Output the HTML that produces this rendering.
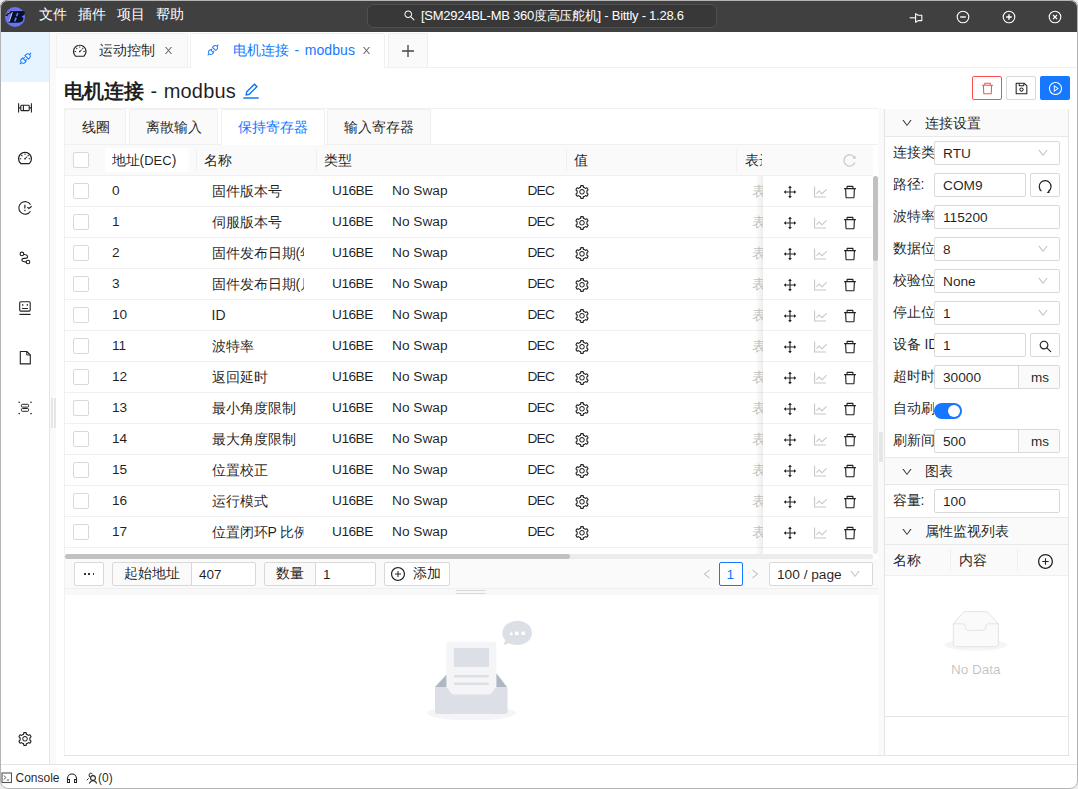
<!DOCTYPE html><html><head><meta charset="utf-8"><style>
*{box-sizing:border-box;margin:0;padding:0}
html,body{width:1078px;height:789px;overflow:hidden;background:#ececec;font-family:"Liberation Sans",sans-serif;font-size:14px;color:rgba(0,0,0,.88)}
.a{position:absolute;display:block}
.t{position:absolute;white-space:nowrap;line-height:16px}
.l{font-size:13.5px}
.b{position:absolute;border:1px solid #d9d9d9;border-radius:4px;background:#fff}
#win{position:absolute;left:0;top:0;width:1078px;height:789px;border-radius:8px;background:#fff;overflow:hidden}
#frame{position:absolute;left:0;top:0;width:1078px;height:789px;border:1px solid #b4b4b4;border-radius:8px;pointer-events:none}
</style></head><body>

<div id="win">
<div class="a" style="left:0px;top:0px;width:1078px;height:32px;background:#404040"></div>
<svg class="a" style="left:0px;top:0px" width="32" height="32" viewBox="0 0 32 32" ><circle cx="15" cy="17" r="10" fill="#6b73f2"/><path d="M5.3 15.6 Q5.6 11.6 10.5 11.2 L22 11.1 Q25.6 11.3 24.6 14 Q24 15.9 21.4 16.6 Q23.9 17.4 23.2 19.8 Q22.2 22.6 17.5 22.7 L9.6 22.7 Q8.3 22.6 8.6 21.7 L11.6 13.2 Q8.2 13.4 7.3 16.2 Z" fill="#071228"/><path d="M12.3 12.2 L9.2 21.6" stroke="#e8ebff" stroke-width=".9" fill="none"/><path d="M17.8 13 L16.5 16.2 M16.2 17.6 L14.6 21.4" stroke="#6b73f2" stroke-width="1.6" fill="none"/><path d="M6.1 14.6 Q6.8 12.3 9.8 12" stroke="#e8ebff" stroke-width=".7" fill="none"/></svg>
<div class="t" style="left:38.5px;top:6px;color:#fff;font-size:14px">文件</div>
<div class="t" style="left:77.5px;top:6px;color:#fff;font-size:14px">插件</div>
<div class="t" style="left:116.5px;top:6px;color:#fff;font-size:14px">项目</div>
<div class="t" style="left:155.5px;top:6px;color:#fff;font-size:14px">帮助</div>
<div class="a" style="left:367px;top:4px;width:350px;height:24px;border:1px solid #505050;border-radius:6px;background:#383838"></div>
<svg class="a" style="left:403px;top:9px;" width="13" height="13" viewBox="0 0 1024 1024" fill="#fff"><path d="M909.6 854.5L649.9 594.8C690.2 542.7 712 479 712 412c0-80.2-31.3-155.4-87.9-212.1-56.6-56.7-132-87.9-212.1-87.9s-155.5 31.3-212.1 87.9C143.2 256.5 112 331.8 112 412c0 80.1 31.3 155.5 87.9 212.1C256.5 680.8 331.8 712 412 712c67 0 130.6-21.8 182.7-62l259.7 259.6a8.2 8.2 0 0011.6 0l43.6-43.5a8.2 8.2 0 000-11.6zM570.4 570.4C528 612.7 471.8 636 412 636s-116-23.3-158.4-65.6C211.3 528 188 471.8 188 412s23.3-116.1 65.6-158.4C296 211.3 352.2 188 412 188s116.1 23.2 158.4 65.6S636 352.2 636 412s-23.3 116.1-65.6 158.4z"/></svg>
<div class="t" style="left:421px;top:8px;color:#fff;font-size:13px;letter-spacing:-.26px">[SM2924BL-MB 360度高压舵机] - Bittly - 1.28.6</div>
<svg class="a" style="left:909px;top:11px" width="14" height="13" viewBox="0 0 14 13" ><path d="M0.7 6.8 H6.5" stroke="#fff" stroke-width="1.1"/><path d="M6.6 2.6 L9.2 4.2 H12.8 V9.6 H9.2 L6.6 11.2 Z" stroke="#fff" stroke-width="1.1" fill="none" stroke-linejoin="round"/></svg>
<svg class="a" style="left:956px;top:10px" width="14" height="14" viewBox="0 0 14 14" ><circle cx="7" cy="7" r="5.8" stroke="#fff" stroke-width="1.1" fill="none"/><path d="M4.2 7 H9.8" stroke="#fff" stroke-width="1.4"/></svg>
<svg class="a" style="left:1002px;top:10px" width="14" height="14" viewBox="0 0 14 14" ><circle cx="7" cy="7" r="5.8" stroke="#fff" stroke-width="1.1" fill="none"/><path d="M4.2 7 H9.8 M7 4.2 V9.8" stroke="#fff" stroke-width="1.4"/></svg>
<svg class="a" style="left:1048px;top:10px" width="14" height="14" viewBox="0 0 14 14" ><circle cx="7" cy="7" r="5.8" stroke="#fff" stroke-width="1.1" fill="none"/><path d="M5 5 L9 9 M9 5 L5 9" stroke="#fff" stroke-width="1.1"/></svg>
<div class="a" style="left:0px;top:32px;width:50px;height:732px;background:#fff;border-right:1px solid #e3e5ea"></div>
<div class="a" style="left:0px;top:32px;width:49px;height:50px;background:#e6f4ff"></div>
<div class="a" style="left:50px;top:32px;width:6px;height:732px;background:#fafafa"></div>
<div class="a" style="left:51px;top:398px;width:2px;height:30px;background:#e6e6e6"></div>
<div class="a" style="left:54px;top:398px;width:2px;height:30px;background:#e6e6e6"></div>
<svg class="a" style="left:17.5px;top:50.5px;" width="15" height="15" viewBox="0 0 1024 1024" fill="#1677ff"><path d="M917.7 148.8l-42.4-42.4c-1.6-1.6-3.6-2.3-5.7-2.3s-4.1.8-5.7 2.3l-76.1 76.1a199.27 199.27 0 00-112.1-34.3c-51.2 0-102.4 19.5-141.5 58.6L432.3 308.7a8.03 8.03 0 000 11.3L704 591.7c1.6 1.6 3.6 2.3 5.7 2.3 2 0 4.1-.8 5.7-2.3l101.9-101.9c68.9-69 77-175.7 24.3-253.5l76.1-76.1c3.1-3.2 3.1-8.3 0-11.4zM769.1 441.7l-59.4 59.4-186.8-186.8 59.4-59.4c24.9-24.9 58.1-38.7 93.4-38.7 35.3 0 68.4 13.7 93.4 38.7 24.9 24.9 38.7 58.1 38.7 93.4 0 35.3-13.8 68.4-38.7 93.4zm-190.2 105a8.03 8.03 0 00-11.3 0L501 613.3 410.7 523l66.7-66.7c3.1-3.1 3.1-8.2 0-11.3L441 408.6a8.03 8.03 0 00-11.3 0L363 475.3l-43-43a7.85 7.85 0 00-5.7-2.3c-2 0-4.1.8-5.7 2.3L206.8 534.2c-68.9 69-77 175.7-24.3 253.5l-76.1 76.1a8.03 8.03 0 000 11.3l42.4 42.4c1.6 1.6 3.6 2.3 5.7 2.3s4.1-.8 5.7-2.3l76.1-76.1c33.7 22.9 72.9 34.3 112.1 34.3 51.2 0 102.4-19.5 141.5-58.6l101.9-101.9c3.1-3.1 3.1-8.2 0-11.3l-43-43 66.7-66.7c3.1-3.1 3.1-8.2 0-11.3l-36.6-36.2zM441.7 769.1a131.32 131.32 0 01-93.4 38.7c-35.3 0-68.4-13.7-93.4-38.7a131.32 131.32 0 01-38.7-93.4c0-35.3 13.7-68.4 38.7-93.4l59.4-59.4 186.8 186.8-59.4 59.4z"/></svg>
<svg class="a" style="left:18px;top:103px" width="14" height="11" viewBox="0 0 14 11" ><g stroke="#222" stroke-width="1.1" fill="none"><path d="M0.6 0.3 V9.5 M13.4 0.3 V9.5"/><rect x="2.8" y="2.3" width="8.4" height="5.3" rx=".8"/><path d="M5.4 2.3 V7.6 M0.6 4.9 H2.8 M11.2 4.9 H13.4"/></g></svg>
<svg class="a" style="left:17px;top:150px;" width="16" height="16" viewBox="0 0 1024 1024" fill="#222"><path d="M924.8 385.6a446.7 446.7 0 00-96-142.4 446.7 446.7 0 00-142.4-96C631.1 123.8 572.5 112 512 112s-119.1 11.8-174.4 35.2a446.7 446.7 0 00-142.4 96 446.7 446.7 0 00-96 142.4C75.8 440.9 64 499.5 64 560c0 132.7 58.3 257.7 159.9 343.1l1.7 1.4c5.8 4.8 13.1 7.5 20.6 7.5h531.7c7.5 0 14.8-2.7 20.6-7.5l1.7-1.4C901.7 817.7 960 692.7 960 560c0-60.5-11.9-119.1-35.2-174.4zM761.4 836H262.6A371.12 371.12 0 01140 560c0-99.4 38.7-192.8 109-263 70.3-70.3 163.7-109 263-109 99.4 0 192.8 38.7 263 109 70.3 70.3 109 163.7 109 263 0 105.6-44.5 205.5-122.6 276zM623.5 421.5a8.03 8.03 0 00-11.3 0L527.7 506c-18.7-5-39.4-.2-54.1 14.5a55.95 55.95 0 000 79.2 55.95 55.95 0 0079.2 0 55.87 55.87 0 0014.5-54.1l84.5-84.5c3.1-3.1 3.1-8.2 0-11.3l-28.3-28.3zM490 320h44c4.4 0 8-3.6 8-8v-80c0-4.4-3.6-8-8-8h-44c-4.4 0-8 3.6-8 8v80c0 4.4 3.6 8 8 8zm260 218v44c0 4.4 3.6 8 8 8h80c4.4 0 8-3.6 8-8v-44c0-4.4-3.6-8-8-8h-80c-4.4 0-8 3.6-8 8zm12.7-197.2l-31.1-31.1a8.03 8.03 0 00-11.3 0l-56.6 56.6a8.03 8.03 0 000 11.3l31.1 31.1c3.1 3.1 8.2 3.1 11.3 0l56.6-56.6c3.1-3.1 3.1-8.2 0-11.3zm-458.6-31.1a8.03 8.03 0 00-11.3 0l-31.1 31.1a8.03 8.03 0 000 11.3l56.6 56.6c3.1 3.1 8.2 3.1 11.3 0l31.1-31.1c3.1-3.1 3.1-8.2 0-11.3l-56.6-56.6zM262 530h-80c-4.4 0-8 3.6-8 8v44c0 4.4 3.6 8 8 8h80c4.4 0 8-3.6 8-8v-44c0-4.4-3.6-8-8-8z"/></svg>
<svg class="a" style="left:18px;top:201px" width="15" height="15" viewBox="0 0 15 15" ><g stroke="#222" stroke-width="1.1" fill="none"><path d="M12.5 3.6 A6.3 6.3 0 1 0 12.5 10.2"/><path d="M6.9 3.8 V7.4" stroke-width="1.2"/><path d="M9.4 6.1 L10.9 7.5 L13.6 5.2" stroke-width="1.2"/></g><circle cx="6.9" cy="9.4" r=".75" fill="#222"/></svg>
<svg class="a" style="left:18px;top:251px" width="14" height="14" viewBox="0 0 14 14" ><g stroke="#222" stroke-width="1.1" fill="none"><circle cx="3.9" cy="2.9" r="1.8"/><circle cx="10" cy="11" r="1.8"/><path d="M5.6 3.2 Q9.6 3.8 9.6 5.8 Q9.6 7.4 7 7.4 H6 Q3.9 7.4 3.9 9.1 Q3.9 10.8 8.2 11.1"/></g></svg>
<svg class="a" style="left:18px;top:301px" width="14" height="14" viewBox="0 0 14 14" ><g stroke="#222" stroke-width="1.1" fill="none"><rect x="1.7" y="0.7" width="10.5" height="9.4" rx="1"/><path d="M1.4 13.4 H12.6" stroke-width="1.2"/><path d="M4.5 7.5 H9.5" stroke-width="1.2" stroke-linecap="round"/></g><ellipse cx="4.7" cy="3.9" rx=".7" ry=".9" fill="#222"/><ellipse cx="9.3" cy="3.9" rx=".7" ry=".9" fill="#222"/></svg>
<svg class="a" style="left:19px;top:350px" width="13" height="15" viewBox="0 0 13 15" ><path d="M1.3 1.5 H7.7 L11.3 5 V13.9 H1.3 Z" stroke="#222" stroke-width="1.1" fill="none" stroke-linejoin="round"/><path d="M7.7 1.5 V5 H11.3" stroke="#222" stroke-width=".9" fill="none"/></svg>
<svg class="a" style="left:18px;top:401px" width="14" height="14" viewBox="0 0 14 14" ><g stroke="#222" stroke-width="1" fill="none"><rect x="3.4" y="3.3" width="7.2" height="2.8" rx="1"/><rect x="3.4" y="7.5" width="7.2" height="2.8" rx="1"/></g><g fill="#222"><circle cx="1.2" cy="1.2" r=".8"/><circle cx="13" cy="1.2" r=".8"/><circle cx="1.2" cy="12.6" r=".8"/><circle cx="13" cy="12.6" r=".8"/></g></svg>
<svg class="a" style="left:17px;top:731px;" width="16" height="16" viewBox="0 0 1024 1024" fill="#222"><path d="M924.8 625.7l-65.5-56c3.1-19 4.7-38.4 4.7-57.8s-1.6-38.8-4.7-57.8l65.5-56a32.03 32.03 0 009.3-35.2l-.9-2.6a443.74 443.74 0 00-79.7-137.9l-1.8-2.1a32.12 32.12 0 00-35.1-9.5l-81.3 28.9c-30-24.6-63.5-44-99.7-57.6l-15.7-85a32.05 32.05 0 00-25.8-25.7l-2.7-.5c-52.1-9.4-106.9-9.4-159 0l-2.7.5a32.05 32.05 0 00-25.8 25.7l-15.8 85.4a351.86 351.86 0 00-99 57.4l-81.9-29.1a32 32 0 00-35.1 9.5l-1.8 2.1a446.02 446.02 0 00-79.7 137.9l-.9 2.6c-4.5 12.5-.8 26.5 9.3 35.2l66.3 56.6c-3.1 18.8-4.6 38-4.6 57.1 0 19.2 1.5 38.4 4.6 57.1L99 625.5a32.03 32.03 0 00-9.3 35.2l.9 2.6c18.1 50.4 44.9 96.9 79.7 137.9l1.8 2.1a32.12 32.12 0 0035.1 9.5l81.9-29.1c29.8 24.5 63.1 43.9 99 57.4l15.8 85.4a32.05 32.05 0 0025.8 25.7l2.7.5a449.4 449.4 0 00159 0l2.7-.5a32.05 32.05 0 0025.8-25.7l15.7-85a350 350 0 0099.7-57.6l81.3 28.9a32 32 0 0035.1-9.5l1.8-2.1c34.8-41.1 61.6-87.5 79.7-137.9l.9-2.6c4.5-12.3.8-26.3-9.3-35zM788.3 465.9c2.5 15.1 3.8 30.6 3.8 46.1s-1.3 31-3.8 46.1l-6.6 40.1 74.7 63.9a370.03 370.03 0 01-42.6 73.6L721 702.8l-31.4 25.8c-23.9 19.6-50.5 35-79.3 45.8l-38.1 14.3-17.9 97a377.5 377.5 0 01-85 0l-17.9-97.2-37.8-14.5c-28.5-10.8-55-26.2-78.7-45.7l-31.4-25.9-93.4 33.2c-17-22.9-31.2-47.6-42.6-73.6l75.5-64.5-6.5-40c-2.4-14.9-3.7-30.3-3.7-45.5 0-15.3 1.2-30.6 3.7-45.5l6.5-40-75.5-64.5c11.3-26.1 25.6-50.7 42.6-73.6l93.4 33.2 31.4-25.9c23.7-19.5 50.2-34.9 78.7-45.7l37.9-14.3 17.9-97.2c28.1-3.2 56.8-3.2 85 0l17.9 97 38.1 14.3c28.7 10.8 55.4 26.2 79.3 45.8l31.4 25.8 92.8-32.9c17 22.9 31.2 47.6 42.6 73.6L781.8 426l6.5 39.9zM512 326c-97.2 0-176 78.8-176 176s78.8 176 176 176 176-78.8 176-176-78.8-176-176-176zm79.2 255.2A111.6 111.6 0 01512 614c-29.9 0-58-11.7-79.2-32.8A111.6 111.6 0 01400 502c0-29.9 11.7-58 32.8-79.2C454 401.6 482.1 390 512 390c29.9 0 58 11.6 79.2 32.8A111.6 111.6 0 01624 502c0 29.9-11.7 58-32.8 79.2z"/></svg>
<div class="a" style="left:56px;top:67px;width:1022px;height:1px;background:#f0f0f0"></div>
<div class="a" style="left:56px;top:33px;width:132px;height:34px;background:#fafafa;border:1px solid #f0f0f0;border-bottom:none;border-radius:2px 2px 0 0"></div>
<div class="a" style="left:190px;top:33px;width:195px;height:35px;background:#fff;border:1px solid #f0f0f0;border-bottom:none;border-radius:2px 2px 0 0"></div>
<div class="a" style="left:388px;top:33px;width:40px;height:34px;background:#fafafa;border:1px solid #f0f0f0;border-bottom:none;border-radius:2px 2px 0 0"></div>
<svg class="a" style="left:72.3px;top:42.5px;" width="15.5" height="15.5" viewBox="0 0 1024 1024" fill="#222"><path d="M924.8 385.6a446.7 446.7 0 00-96-142.4 446.7 446.7 0 00-142.4-96C631.1 123.8 572.5 112 512 112s-119.1 11.8-174.4 35.2a446.7 446.7 0 00-142.4 96 446.7 446.7 0 00-96 142.4C75.8 440.9 64 499.5 64 560c0 132.7 58.3 257.7 159.9 343.1l1.7 1.4c5.8 4.8 13.1 7.5 20.6 7.5h531.7c7.5 0 14.8-2.7 20.6-7.5l1.7-1.4C901.7 817.7 960 692.7 960 560c0-60.5-11.9-119.1-35.2-174.4zM761.4 836H262.6A371.12 371.12 0 01140 560c0-99.4 38.7-192.8 109-263 70.3-70.3 163.7-109 263-109 99.4 0 192.8 38.7 263 109 70.3 70.3 109 163.7 109 263 0 105.6-44.5 205.5-122.6 276zM623.5 421.5a8.03 8.03 0 00-11.3 0L527.7 506c-18.7-5-39.4-.2-54.1 14.5a55.95 55.95 0 000 79.2 55.95 55.95 0 0079.2 0 55.87 55.87 0 0014.5-54.1l84.5-84.5c3.1-3.1 3.1-8.2 0-11.3l-28.3-28.3zM490 320h44c4.4 0 8-3.6 8-8v-80c0-4.4-3.6-8-8-8h-44c-4.4 0-8 3.6-8 8v80c0 4.4 3.6 8 8 8zm260 218v44c0 4.4 3.6 8 8 8h80c4.4 0 8-3.6 8-8v-44c0-4.4-3.6-8-8-8h-80c-4.4 0-8 3.6-8 8zm12.7-197.2l-31.1-31.1a8.03 8.03 0 00-11.3 0l-56.6 56.6a8.03 8.03 0 000 11.3l31.1 31.1c3.1 3.1 8.2 3.1 11.3 0l56.6-56.6c3.1-3.1 3.1-8.2 0-11.3zm-458.6-31.1a8.03 8.03 0 00-11.3 0l-31.1 31.1a8.03 8.03 0 000 11.3l56.6 56.6c3.1 3.1 8.2 3.1 11.3 0l31.1-31.1c3.1-3.1 3.1-8.2 0-11.3l-56.6-56.6zM262 530h-80c-4.4 0-8 3.6-8 8v44c0 4.4 3.6 8 8 8h80c4.4 0 8-3.6 8-8v-44c0-4.4-3.6-8-8-8z"/></svg>
<div class="t" style="left:98.5px;top:42px;">运动控制</div>
<svg class="a" style="left:163px;top:45px;" width="11" height="11" viewBox="0 0 1024 1024" fill="#666"><path d="M563.8 512l262.5-312.9c4.4-5.2.7-13.1-6.1-13.1h-79.8c-4.7 0-9.2 2.1-12.3 5.7L511.6 449.8 295.1 191.7c-3-3.6-7.5-5.7-12.3-5.7H203c-6.8 0-10.5 7.9-6.1 13.1L459.4 512 196.9 824.9A7.95 7.95 0 00203 838h79.8c4.7 0 9.2-2.1 12.3-5.7l216.5-258.1 216.5 258.1c3 3.6 7.5 5.7 12.3 5.7h79.8c6.8 0 10.5-7.9 6.1-13.1L563.8 512z"/></svg>
<svg class="a" style="left:206px;top:43px;" width="14" height="14" viewBox="0 0 1024 1024" fill="#1677ff"><path d="M917.7 148.8l-42.4-42.4c-1.6-1.6-3.6-2.3-5.7-2.3s-4.1.8-5.7 2.3l-76.1 76.1a199.27 199.27 0 00-112.1-34.3c-51.2 0-102.4 19.5-141.5 58.6L432.3 308.7a8.03 8.03 0 000 11.3L704 591.7c1.6 1.6 3.6 2.3 5.7 2.3 2 0 4.1-.8 5.7-2.3l101.9-101.9c68.9-69 77-175.7 24.3-253.5l76.1-76.1c3.1-3.2 3.1-8.3 0-11.4zM769.1 441.7l-59.4 59.4-186.8-186.8 59.4-59.4c24.9-24.9 58.1-38.7 93.4-38.7 35.3 0 68.4 13.7 93.4 38.7 24.9 24.9 38.7 58.1 38.7 93.4 0 35.3-13.8 68.4-38.7 93.4zm-190.2 105a8.03 8.03 0 00-11.3 0L501 613.3 410.7 523l66.7-66.7c3.1-3.1 3.1-8.2 0-11.3L441 408.6a8.03 8.03 0 00-11.3 0L363 475.3l-43-43a7.85 7.85 0 00-5.7-2.3c-2 0-4.1.8-5.7 2.3L206.8 534.2c-68.9 69-77 175.7-24.3 253.5l-76.1 76.1a8.03 8.03 0 000 11.3l42.4 42.4c1.6 1.6 3.6 2.3 5.7 2.3s4.1-.8 5.7-2.3l76.1-76.1c33.7 22.9 72.9 34.3 112.1 34.3 51.2 0 102.4-19.5 141.5-58.6l101.9-101.9c3.1-3.1 3.1-8.2 0-11.3l-43-43 66.7-66.7c3.1-3.1 3.1-8.2 0-11.3l-36.6-36.2zM441.7 769.1a131.32 131.32 0 01-93.4 38.7c-35.3 0-68.4-13.7-93.4-38.7a131.32 131.32 0 01-38.7-93.4c0-35.3 13.7-68.4 38.7-93.4l59.4-59.4 186.8 186.8-59.4 59.4z"/></svg>
<div class="t" style="left:232.5px;top:42px;color:#1677ff;word-spacing:1.5px;letter-spacing:.1px">电机连接 - modbus</div>
<svg class="a" style="left:361px;top:45px;" width="11" height="11" viewBox="0 0 1024 1024" fill="#666"><path d="M563.8 512l262.5-312.9c4.4-5.2.7-13.1-6.1-13.1h-79.8c-4.7 0-9.2 2.1-12.3 5.7L511.6 449.8 295.1 191.7c-3-3.6-7.5-5.7-12.3-5.7H203c-6.8 0-10.5 7.9-6.1 13.1L459.4 512 196.9 824.9A7.95 7.95 0 00203 838h79.8c4.7 0 9.2-2.1 12.3-5.7l216.5-258.1 216.5 258.1c3 3.6 7.5 5.7 12.3 5.7h79.8c6.8 0 10.5-7.9 6.1-13.1L563.8 512z"/></svg>
<svg class="a" style="left:401px;top:44px" width="14" height="14" viewBox="0 0 14 14" ><path d="M7 1 V13 M1 7 H13" stroke="#444" stroke-width="1.3"/></svg>
<div class="t" style="left:63.5px;top:80px;font-size:20px;line-height:22px;word-spacing:.5px;letter-spacing:.2px"><b>电机连接</b> - modbus</div>
<svg class="a" style="left:241px;top:81px;" width="20" height="20" viewBox="0 0 1024 1024" fill="#1677ff"><path d="M257.7 752c2 0 4-.2 6-.5L431.9 722c2-.4 3.9-1.3 5.3-2.8l423.9-423.9a9.96 9.96 0 000-14.1L694.9 114.9c-1.9-1.9-4.4-2.9-7.1-2.9s-5.2 1-7.1 2.9L256.8 538.8c-1.5 1.5-2.4 3.3-2.8 5.3l-29.5 168.2a33.5 33.5 0 009.4 29.8c6.6 6.4 14.9 9.9 23.8 9.9zm67.4-174.4L687.8 215l73.3 73.3-362.7 362.6-88.9 15.7 15.6-89zM880 836H144c-17.7 0-32 14.3-32 32v36c0 4.4 3.6 8 8 8h784c4.4 0 8-3.6 8-8v-36c0-17.7-14.3-32-32-32z"/></svg>
<div class="a" style="left:972px;top:76px;width:30px;height:24px;border:1px solid #ff4d4f;border-radius:2px;background:#fff"></div>
<svg class="a" style="left:979.5px;top:80.5px;" width="15" height="15" viewBox="0 0 1024 1024" fill="#ff4d4f"><path d="M360 184h-8c4.4 0 8-3.6 8-8v8h304v-8c0 4.4 3.6 8 8 8h-8v72h72v-80c0-35.3-28.7-64-64-64H352c-35.3 0-64 28.7-64 64v80h72v-72zm504 72H160c-17.7 0-32 14.3-32 32v32c0 4.4 3.6 8 8 8h60.4l24.7 523c1.6 34.1 29.8 61 63.9 61h454c34.2 0 62.3-26.8 63.9-61l24.7-523H888c4.4 0 8-3.6 8-8v-32c0-17.7-14.3-32-32-32zM731.3 840H292.7l-24.2-512h487l-24.2 512z"/></svg>
<div class="a" style="left:1006px;top:76px;width:30px;height:24px;border:1px solid #d9d9d9;border-radius:2px;background:#fff"></div>
<svg class="a" style="left:1013.5px;top:80.5px;" width="15" height="15" viewBox="0 0 1024 1024" fill="#222"><path d="M893.3 293.3L730.7 130.7c-7.5-7.5-16.7-13-26.7-16V112H144c-17.7 0-32 14.3-32 32v736c0 17.7 14.3 32 32 32h736c17.7 0 32-14.3 32-32V338.5c0-17-6.7-33.2-18.7-45.2zM384 184h256v104H384V184zm456 656H184V184h136v136c0 17.7 14.3 32 32 32h320c17.7 0 32-14.3 32-32V205.8l136 136V840zM512 442c-79.5 0-144 64.5-144 144s64.5 144 144 144 144-64.5 144-144-64.5-144-144-144zm0 224c-44.2 0-80-35.8-80-80s35.8-80 80-80 80 35.8 80 80-35.8 80-80 80z"/></svg>
<div class="a" style="left:1040px;top:76px;width:30px;height:24px;border-radius:2px;background:#1677ff"></div>
<svg class="a" style="left:1047.5px;top:80.5px;" width="15" height="15" viewBox="0 0 1024 1024" fill="#fff"><path d="M512 64C264.6 64 64 264.6 64 512s200.6 448 448 448 448-200.6 448-448S759.4 64 512 64zm0 820c-205.4 0-372-166.6-372-372s166.6-372 372-372 372 166.6 372 372-166.6 372-372 372zM719.4 499.1l-296.1-215A15.9 15.9 0 00398 297v430c0 13.1 14.8 20.5 25.3 12.9l296.1-215a15.9 15.9 0 000-25.8zm-257.6 134V390.9L628.5 512 461.8 633.1z"/></svg>
<div class="a" style="left:64px;top:108px;width:815px;height:648px;border:1px solid #f0f0f0;border-right:none;background:#fff"></div>
<div class="a" style="left:65px;top:144px;width:813px;height:1px;background:#f0f0f0"></div>
<div class="a" style="left:64px;top:109px;width:62px;height:35px;background:#fafafa;border:1px solid #f0f0f0;border-bottom:none;border-radius:2px 2px 0 0"></div>
<div class="t" style="left:81.5px;top:119px;color:rgba(0,0,0,.88)">线圈</div>
<div class="a" style="left:129px;top:109px;width:89px;height:35px;background:#fafafa;border:1px solid #f0f0f0;border-bottom:none;border-radius:2px 2px 0 0"></div>
<div class="t" style="left:145.5px;top:119px;color:rgba(0,0,0,.88)">离散输入</div>
<div class="a" style="left:221px;top:109px;width:104px;height:36px;background:#fff;border:1px solid #f0f0f0;border-bottom:none;border-radius:2px 2px 0 0"></div>
<div class="t" style="left:237.5px;top:119px;color:#1677ff">保持寄存器</div>
<div class="a" style="left:327px;top:109px;width:104px;height:35px;background:#fafafa;border:1px solid #f0f0f0;border-bottom:none;border-radius:2px 2px 0 0"></div>
<div class="t" style="left:343.5px;top:119px;color:rgba(0,0,0,.88)">输入寄存器</div>
<div class="a" style="left:65px;top:145px;width:808px;height:31px;background:#fafafa;border-bottom:1px solid #f0f0f0"></div>
<div class="a" style="left:105px;top:148px;width:84px;height:24px;background:#fff;border-radius:4px"></div>
<div class="a" style="left:196px;top:150px;width:1px;height:21px;background:#f0f0f0"></div>
<div class="a" style="left:316px;top:150px;width:1px;height:21px;background:#f0f0f0"></div>
<div class="a" style="left:566px;top:150px;width:1px;height:21px;background:#f0f0f0"></div>
<div class="a" style="left:736px;top:150px;width:1px;height:21px;background:#f0f0f0"></div>
<div class="a" style="left:73px;top:152px;width:16px;height:16px;border:1px solid #d9d9d9;border-radius:2px;background:#fff"></div>
<div class="t" style="left:111.5px;top:152px;">地址(<span style="font-size:13px">DEC</span>)</div>
<div class="t" style="left:204px;top:152px;">名称</div>
<div class="t" style="left:324px;top:152px;">类型</div>
<div class="t" style="left:574px;top:152px;">值</div>
<div class="a" style="left:745px;top:145px;width:17px;height:30px;overflow:hidden"><div class="t" style="left:0;top:7px">表达式</div></div>
<svg class="a" style="left:842px;top:153px;" width="15" height="15" viewBox="0 0 1024 1024" fill="#c4c4c4"><path d="M909.1 209.3l-56.4 44.1C775.8 155.1 656.2 92 521.9 92 290 92 102.3 279.5 102 511.5 101.7 743.7 289.8 932 521.9 932c181.3 0 335.8-115 394.6-276.1 1.5-4.2-.7-8.9-4.9-10.3l-56.7-19.5a8 8 0 00-10.1 4.8c-1.8 5-3.8 10-5.9 14.9-17.3 41-42.1 77.8-73.7 109.4A344.77 344.77 0 01655.9 829c-42.3 17.9-87.4 27-133.8 27-46.5 0-91.5-9.1-133.8-27A341.5 341.5 0 01279 755.2a342.16 342.16 0 01-73.7-109.4c-17.9-42.4-27-87.4-27-133.9s9.1-91.5 27-133.9c17.3-41 42.1-77.8 73.7-109.4 31.6-31.6 68.4-56.4 109.3-73.8 42.3-17.9 87.4-27 133.8-27 46.5 0 91.5 9.1 133.8 27a341.5 341.5 0 01109.3 73.8c9.9 9.9 19.2 20.4 27.8 31.4l-60.2 47a8 8 0 003 14.1l175.6 43c5 1.2 9.9-2.6 9.9-7.7l.8-180.9c-.1-6.6-7.8-10.3-13-6.2z"/></svg>
<div class="a" style="left:65px;top:206px;width:808px;height:1px;background:#f0f0f0"></div>
<div class="a" style="left:73px;top:183px;width:16px;height:16px;border:1px solid #d9d9d9;border-radius:2px;background:#fff"></div>
<div class="t" style="left:112px;top:182.5px;font-size:13.7px">0</div>
<div class="a" style="left:211.5px;top:183px;width:92px;height:18px;overflow:hidden"><div class="t" style="left:0;top:0">固件版本号</div></div>
<div class="t" style="left:332px;top:182.5px;font-size:13.7px;letter-spacing:-.5px">U16BE</div>
<div class="t" style="left:392px;top:182.5px;font-size:13.7px">No Swap</div>
<div class="t" style="left:527.5px;top:182.5px;font-size:13.7px;letter-spacing:-.8px">DEC</div>
<svg class="a" style="left:574px;top:184px;" width="16" height="16" viewBox="0 0 1024 1024" fill="#222"><path d="M924.8 625.7l-65.5-56c3.1-19 4.7-38.4 4.7-57.8s-1.6-38.8-4.7-57.8l65.5-56a32.03 32.03 0 009.3-35.2l-.9-2.6a443.74 443.74 0 00-79.7-137.9l-1.8-2.1a32.12 32.12 0 00-35.1-9.5l-81.3 28.9c-30-24.6-63.5-44-99.7-57.6l-15.7-85a32.05 32.05 0 00-25.8-25.7l-2.7-.5c-52.1-9.4-106.9-9.4-159 0l-2.7.5a32.05 32.05 0 00-25.8 25.7l-15.8 85.4a351.86 351.86 0 00-99 57.4l-81.9-29.1a32 32 0 00-35.1 9.5l-1.8 2.1a446.02 446.02 0 00-79.7 137.9l-.9 2.6c-4.5 12.5-.8 26.5 9.3 35.2l66.3 56.6c-3.1 18.8-4.6 38-4.6 57.1 0 19.2 1.5 38.4 4.6 57.1L99 625.5a32.03 32.03 0 00-9.3 35.2l.9 2.6c18.1 50.4 44.9 96.9 79.7 137.9l1.8 2.1a32.12 32.12 0 0035.1 9.5l81.9-29.1c29.8 24.5 63.1 43.9 99 57.4l15.8 85.4a32.05 32.05 0 0025.8 25.7l2.7.5a449.4 449.4 0 00159 0l2.7-.5a32.05 32.05 0 0025.8-25.7l15.7-85a350 350 0 0099.7-57.6l81.3 28.9a32 32 0 0035.1-9.5l1.8-2.1c34.8-41.1 61.6-87.5 79.7-137.9l.9-2.6c4.5-12.3.8-26.3-9.3-35zM788.3 465.9c2.5 15.1 3.8 30.6 3.8 46.1s-1.3 31-3.8 46.1l-6.6 40.1 74.7 63.9a370.03 370.03 0 01-42.6 73.6L721 702.8l-31.4 25.8c-23.9 19.6-50.5 35-79.3 45.8l-38.1 14.3-17.9 97a377.5 377.5 0 01-85 0l-17.9-97.2-37.8-14.5c-28.5-10.8-55-26.2-78.7-45.7l-31.4-25.9-93.4 33.2c-17-22.9-31.2-47.6-42.6-73.6l75.5-64.5-6.5-40c-2.4-14.9-3.7-30.3-3.7-45.5 0-15.3 1.2-30.6 3.7-45.5l6.5-40-75.5-64.5c11.3-26.1 25.6-50.7 42.6-73.6l93.4 33.2 31.4-25.9c23.7-19.5 50.2-34.9 78.7-45.7l37.9-14.3 17.9-97.2c28.1-3.2 56.8-3.2 85 0l17.9 97 38.1 14.3c28.7 10.8 55.4 26.2 79.3 45.8l31.4 25.8 92.8-32.9c17 22.9 31.2 47.6 42.6 73.6L781.8 426l6.5 39.9zM512 326c-97.2 0-176 78.8-176 176s78.8 176 176 176 176-78.8 176-176-78.8-176-176-176zm79.2 255.2A111.6 111.6 0 01512 614c-29.9 0-58-11.7-79.2-32.8A111.6 111.6 0 01400 502c0-29.9 11.7-58 32.8-79.2C454 401.6 482.1 390 512 390c29.9 0 58 11.6 79.2 32.8A111.6 111.6 0 01624 502c0 29.9-11.7 58-32.8 79.2z"/></svg>
<div class="a" style="left:751.5px;top:183px;width:11px;height:18px;overflow:hidden"><div class="t" style="left:0;top:0;color:rgba(0,0,0,.25)">表达式</div></div>
<div class="a" style="left:65px;top:237px;width:808px;height:1px;background:#f0f0f0"></div>
<div class="a" style="left:73px;top:214px;width:16px;height:16px;border:1px solid #d9d9d9;border-radius:2px;background:#fff"></div>
<div class="t" style="left:112px;top:213.5px;font-size:13.7px">1</div>
<div class="a" style="left:211.5px;top:214px;width:92px;height:18px;overflow:hidden"><div class="t" style="left:0;top:0">伺服版本号</div></div>
<div class="t" style="left:332px;top:213.5px;font-size:13.7px;letter-spacing:-.5px">U16BE</div>
<div class="t" style="left:392px;top:213.5px;font-size:13.7px">No Swap</div>
<div class="t" style="left:527.5px;top:213.5px;font-size:13.7px;letter-spacing:-.8px">DEC</div>
<svg class="a" style="left:574px;top:215px;" width="16" height="16" viewBox="0 0 1024 1024" fill="#222"><path d="M924.8 625.7l-65.5-56c3.1-19 4.7-38.4 4.7-57.8s-1.6-38.8-4.7-57.8l65.5-56a32.03 32.03 0 009.3-35.2l-.9-2.6a443.74 443.74 0 00-79.7-137.9l-1.8-2.1a32.12 32.12 0 00-35.1-9.5l-81.3 28.9c-30-24.6-63.5-44-99.7-57.6l-15.7-85a32.05 32.05 0 00-25.8-25.7l-2.7-.5c-52.1-9.4-106.9-9.4-159 0l-2.7.5a32.05 32.05 0 00-25.8 25.7l-15.8 85.4a351.86 351.86 0 00-99 57.4l-81.9-29.1a32 32 0 00-35.1 9.5l-1.8 2.1a446.02 446.02 0 00-79.7 137.9l-.9 2.6c-4.5 12.5-.8 26.5 9.3 35.2l66.3 56.6c-3.1 18.8-4.6 38-4.6 57.1 0 19.2 1.5 38.4 4.6 57.1L99 625.5a32.03 32.03 0 00-9.3 35.2l.9 2.6c18.1 50.4 44.9 96.9 79.7 137.9l1.8 2.1a32.12 32.12 0 0035.1 9.5l81.9-29.1c29.8 24.5 63.1 43.9 99 57.4l15.8 85.4a32.05 32.05 0 0025.8 25.7l2.7.5a449.4 449.4 0 00159 0l2.7-.5a32.05 32.05 0 0025.8-25.7l15.7-85a350 350 0 0099.7-57.6l81.3 28.9a32 32 0 0035.1-9.5l1.8-2.1c34.8-41.1 61.6-87.5 79.7-137.9l.9-2.6c4.5-12.3.8-26.3-9.3-35zM788.3 465.9c2.5 15.1 3.8 30.6 3.8 46.1s-1.3 31-3.8 46.1l-6.6 40.1 74.7 63.9a370.03 370.03 0 01-42.6 73.6L721 702.8l-31.4 25.8c-23.9 19.6-50.5 35-79.3 45.8l-38.1 14.3-17.9 97a377.5 377.5 0 01-85 0l-17.9-97.2-37.8-14.5c-28.5-10.8-55-26.2-78.7-45.7l-31.4-25.9-93.4 33.2c-17-22.9-31.2-47.6-42.6-73.6l75.5-64.5-6.5-40c-2.4-14.9-3.7-30.3-3.7-45.5 0-15.3 1.2-30.6 3.7-45.5l6.5-40-75.5-64.5c11.3-26.1 25.6-50.7 42.6-73.6l93.4 33.2 31.4-25.9c23.7-19.5 50.2-34.9 78.7-45.7l37.9-14.3 17.9-97.2c28.1-3.2 56.8-3.2 85 0l17.9 97 38.1 14.3c28.7 10.8 55.4 26.2 79.3 45.8l31.4 25.8 92.8-32.9c17 22.9 31.2 47.6 42.6 73.6L781.8 426l6.5 39.9zM512 326c-97.2 0-176 78.8-176 176s78.8 176 176 176 176-78.8 176-176-78.8-176-176-176zm79.2 255.2A111.6 111.6 0 01512 614c-29.9 0-58-11.7-79.2-32.8A111.6 111.6 0 01400 502c0-29.9 11.7-58 32.8-79.2C454 401.6 482.1 390 512 390c29.9 0 58 11.6 79.2 32.8A111.6 111.6 0 01624 502c0 29.9-11.7 58-32.8 79.2z"/></svg>
<div class="a" style="left:751.5px;top:214px;width:11px;height:18px;overflow:hidden"><div class="t" style="left:0;top:0;color:rgba(0,0,0,.25)">表达式</div></div>
<div class="a" style="left:65px;top:268px;width:808px;height:1px;background:#f0f0f0"></div>
<div class="a" style="left:73px;top:245px;width:16px;height:16px;border:1px solid #d9d9d9;border-radius:2px;background:#fff"></div>
<div class="t" style="left:112px;top:244.5px;font-size:13.7px">2</div>
<div class="a" style="left:211.5px;top:245px;width:92px;height:18px;overflow:hidden"><div class="t" style="left:0;top:0">固件发布日期(年)</div></div>
<div class="t" style="left:332px;top:244.5px;font-size:13.7px;letter-spacing:-.5px">U16BE</div>
<div class="t" style="left:392px;top:244.5px;font-size:13.7px">No Swap</div>
<div class="t" style="left:527.5px;top:244.5px;font-size:13.7px;letter-spacing:-.8px">DEC</div>
<svg class="a" style="left:574px;top:246px;" width="16" height="16" viewBox="0 0 1024 1024" fill="#222"><path d="M924.8 625.7l-65.5-56c3.1-19 4.7-38.4 4.7-57.8s-1.6-38.8-4.7-57.8l65.5-56a32.03 32.03 0 009.3-35.2l-.9-2.6a443.74 443.74 0 00-79.7-137.9l-1.8-2.1a32.12 32.12 0 00-35.1-9.5l-81.3 28.9c-30-24.6-63.5-44-99.7-57.6l-15.7-85a32.05 32.05 0 00-25.8-25.7l-2.7-.5c-52.1-9.4-106.9-9.4-159 0l-2.7.5a32.05 32.05 0 00-25.8 25.7l-15.8 85.4a351.86 351.86 0 00-99 57.4l-81.9-29.1a32 32 0 00-35.1 9.5l-1.8 2.1a446.02 446.02 0 00-79.7 137.9l-.9 2.6c-4.5 12.5-.8 26.5 9.3 35.2l66.3 56.6c-3.1 18.8-4.6 38-4.6 57.1 0 19.2 1.5 38.4 4.6 57.1L99 625.5a32.03 32.03 0 00-9.3 35.2l.9 2.6c18.1 50.4 44.9 96.9 79.7 137.9l1.8 2.1a32.12 32.12 0 0035.1 9.5l81.9-29.1c29.8 24.5 63.1 43.9 99 57.4l15.8 85.4a32.05 32.05 0 0025.8 25.7l2.7.5a449.4 449.4 0 00159 0l2.7-.5a32.05 32.05 0 0025.8-25.7l15.7-85a350 350 0 0099.7-57.6l81.3 28.9a32 32 0 0035.1-9.5l1.8-2.1c34.8-41.1 61.6-87.5 79.7-137.9l.9-2.6c4.5-12.3.8-26.3-9.3-35zM788.3 465.9c2.5 15.1 3.8 30.6 3.8 46.1s-1.3 31-3.8 46.1l-6.6 40.1 74.7 63.9a370.03 370.03 0 01-42.6 73.6L721 702.8l-31.4 25.8c-23.9 19.6-50.5 35-79.3 45.8l-38.1 14.3-17.9 97a377.5 377.5 0 01-85 0l-17.9-97.2-37.8-14.5c-28.5-10.8-55-26.2-78.7-45.7l-31.4-25.9-93.4 33.2c-17-22.9-31.2-47.6-42.6-73.6l75.5-64.5-6.5-40c-2.4-14.9-3.7-30.3-3.7-45.5 0-15.3 1.2-30.6 3.7-45.5l6.5-40-75.5-64.5c11.3-26.1 25.6-50.7 42.6-73.6l93.4 33.2 31.4-25.9c23.7-19.5 50.2-34.9 78.7-45.7l37.9-14.3 17.9-97.2c28.1-3.2 56.8-3.2 85 0l17.9 97 38.1 14.3c28.7 10.8 55.4 26.2 79.3 45.8l31.4 25.8 92.8-32.9c17 22.9 31.2 47.6 42.6 73.6L781.8 426l6.5 39.9zM512 326c-97.2 0-176 78.8-176 176s78.8 176 176 176 176-78.8 176-176-78.8-176-176-176zm79.2 255.2A111.6 111.6 0 01512 614c-29.9 0-58-11.7-79.2-32.8A111.6 111.6 0 01400 502c0-29.9 11.7-58 32.8-79.2C454 401.6 482.1 390 512 390c29.9 0 58 11.6 79.2 32.8A111.6 111.6 0 01624 502c0 29.9-11.7 58-32.8 79.2z"/></svg>
<div class="a" style="left:751.5px;top:245px;width:11px;height:18px;overflow:hidden"><div class="t" style="left:0;top:0;color:rgba(0,0,0,.25)">表达式</div></div>
<div class="a" style="left:65px;top:299px;width:808px;height:1px;background:#f0f0f0"></div>
<div class="a" style="left:73px;top:276px;width:16px;height:16px;border:1px solid #d9d9d9;border-radius:2px;background:#fff"></div>
<div class="t" style="left:112px;top:275.5px;font-size:13.7px">3</div>
<div class="a" style="left:211.5px;top:276px;width:92px;height:18px;overflow:hidden"><div class="t" style="left:0;top:0">固件发布日期(月日)</div></div>
<div class="t" style="left:332px;top:275.5px;font-size:13.7px;letter-spacing:-.5px">U16BE</div>
<div class="t" style="left:392px;top:275.5px;font-size:13.7px">No Swap</div>
<div class="t" style="left:527.5px;top:275.5px;font-size:13.7px;letter-spacing:-.8px">DEC</div>
<svg class="a" style="left:574px;top:277px;" width="16" height="16" viewBox="0 0 1024 1024" fill="#222"><path d="M924.8 625.7l-65.5-56c3.1-19 4.7-38.4 4.7-57.8s-1.6-38.8-4.7-57.8l65.5-56a32.03 32.03 0 009.3-35.2l-.9-2.6a443.74 443.74 0 00-79.7-137.9l-1.8-2.1a32.12 32.12 0 00-35.1-9.5l-81.3 28.9c-30-24.6-63.5-44-99.7-57.6l-15.7-85a32.05 32.05 0 00-25.8-25.7l-2.7-.5c-52.1-9.4-106.9-9.4-159 0l-2.7.5a32.05 32.05 0 00-25.8 25.7l-15.8 85.4a351.86 351.86 0 00-99 57.4l-81.9-29.1a32 32 0 00-35.1 9.5l-1.8 2.1a446.02 446.02 0 00-79.7 137.9l-.9 2.6c-4.5 12.5-.8 26.5 9.3 35.2l66.3 56.6c-3.1 18.8-4.6 38-4.6 57.1 0 19.2 1.5 38.4 4.6 57.1L99 625.5a32.03 32.03 0 00-9.3 35.2l.9 2.6c18.1 50.4 44.9 96.9 79.7 137.9l1.8 2.1a32.12 32.12 0 0035.1 9.5l81.9-29.1c29.8 24.5 63.1 43.9 99 57.4l15.8 85.4a32.05 32.05 0 0025.8 25.7l2.7.5a449.4 449.4 0 00159 0l2.7-.5a32.05 32.05 0 0025.8-25.7l15.7-85a350 350 0 0099.7-57.6l81.3 28.9a32 32 0 0035.1-9.5l1.8-2.1c34.8-41.1 61.6-87.5 79.7-137.9l.9-2.6c4.5-12.3.8-26.3-9.3-35zM788.3 465.9c2.5 15.1 3.8 30.6 3.8 46.1s-1.3 31-3.8 46.1l-6.6 40.1 74.7 63.9a370.03 370.03 0 01-42.6 73.6L721 702.8l-31.4 25.8c-23.9 19.6-50.5 35-79.3 45.8l-38.1 14.3-17.9 97a377.5 377.5 0 01-85 0l-17.9-97.2-37.8-14.5c-28.5-10.8-55-26.2-78.7-45.7l-31.4-25.9-93.4 33.2c-17-22.9-31.2-47.6-42.6-73.6l75.5-64.5-6.5-40c-2.4-14.9-3.7-30.3-3.7-45.5 0-15.3 1.2-30.6 3.7-45.5l6.5-40-75.5-64.5c11.3-26.1 25.6-50.7 42.6-73.6l93.4 33.2 31.4-25.9c23.7-19.5 50.2-34.9 78.7-45.7l37.9-14.3 17.9-97.2c28.1-3.2 56.8-3.2 85 0l17.9 97 38.1 14.3c28.7 10.8 55.4 26.2 79.3 45.8l31.4 25.8 92.8-32.9c17 22.9 31.2 47.6 42.6 73.6L781.8 426l6.5 39.9zM512 326c-97.2 0-176 78.8-176 176s78.8 176 176 176 176-78.8 176-176-78.8-176-176-176zm79.2 255.2A111.6 111.6 0 01512 614c-29.9 0-58-11.7-79.2-32.8A111.6 111.6 0 01400 502c0-29.9 11.7-58 32.8-79.2C454 401.6 482.1 390 512 390c29.9 0 58 11.6 79.2 32.8A111.6 111.6 0 01624 502c0 29.9-11.7 58-32.8 79.2z"/></svg>
<div class="a" style="left:751.5px;top:276px;width:11px;height:18px;overflow:hidden"><div class="t" style="left:0;top:0;color:rgba(0,0,0,.25)">表达式</div></div>
<div class="a" style="left:65px;top:330px;width:808px;height:1px;background:#f0f0f0"></div>
<div class="a" style="left:73px;top:307px;width:16px;height:16px;border:1px solid #d9d9d9;border-radius:2px;background:#fff"></div>
<div class="t" style="left:112px;top:306.5px;font-size:13.7px">10</div>
<div class="a" style="left:211.5px;top:307px;width:92px;height:18px;overflow:hidden"><div class="t" style="left:0;top:0">ID</div></div>
<div class="t" style="left:332px;top:306.5px;font-size:13.7px;letter-spacing:-.5px">U16BE</div>
<div class="t" style="left:392px;top:306.5px;font-size:13.7px">No Swap</div>
<div class="t" style="left:527.5px;top:306.5px;font-size:13.7px;letter-spacing:-.8px">DEC</div>
<svg class="a" style="left:574px;top:308px;" width="16" height="16" viewBox="0 0 1024 1024" fill="#222"><path d="M924.8 625.7l-65.5-56c3.1-19 4.7-38.4 4.7-57.8s-1.6-38.8-4.7-57.8l65.5-56a32.03 32.03 0 009.3-35.2l-.9-2.6a443.74 443.74 0 00-79.7-137.9l-1.8-2.1a32.12 32.12 0 00-35.1-9.5l-81.3 28.9c-30-24.6-63.5-44-99.7-57.6l-15.7-85a32.05 32.05 0 00-25.8-25.7l-2.7-.5c-52.1-9.4-106.9-9.4-159 0l-2.7.5a32.05 32.05 0 00-25.8 25.7l-15.8 85.4a351.86 351.86 0 00-99 57.4l-81.9-29.1a32 32 0 00-35.1 9.5l-1.8 2.1a446.02 446.02 0 00-79.7 137.9l-.9 2.6c-4.5 12.5-.8 26.5 9.3 35.2l66.3 56.6c-3.1 18.8-4.6 38-4.6 57.1 0 19.2 1.5 38.4 4.6 57.1L99 625.5a32.03 32.03 0 00-9.3 35.2l.9 2.6c18.1 50.4 44.9 96.9 79.7 137.9l1.8 2.1a32.12 32.12 0 0035.1 9.5l81.9-29.1c29.8 24.5 63.1 43.9 99 57.4l15.8 85.4a32.05 32.05 0 0025.8 25.7l2.7.5a449.4 449.4 0 00159 0l2.7-.5a32.05 32.05 0 0025.8-25.7l15.7-85a350 350 0 0099.7-57.6l81.3 28.9a32 32 0 0035.1-9.5l1.8-2.1c34.8-41.1 61.6-87.5 79.7-137.9l.9-2.6c4.5-12.3.8-26.3-9.3-35zM788.3 465.9c2.5 15.1 3.8 30.6 3.8 46.1s-1.3 31-3.8 46.1l-6.6 40.1 74.7 63.9a370.03 370.03 0 01-42.6 73.6L721 702.8l-31.4 25.8c-23.9 19.6-50.5 35-79.3 45.8l-38.1 14.3-17.9 97a377.5 377.5 0 01-85 0l-17.9-97.2-37.8-14.5c-28.5-10.8-55-26.2-78.7-45.7l-31.4-25.9-93.4 33.2c-17-22.9-31.2-47.6-42.6-73.6l75.5-64.5-6.5-40c-2.4-14.9-3.7-30.3-3.7-45.5 0-15.3 1.2-30.6 3.7-45.5l6.5-40-75.5-64.5c11.3-26.1 25.6-50.7 42.6-73.6l93.4 33.2 31.4-25.9c23.7-19.5 50.2-34.9 78.7-45.7l37.9-14.3 17.9-97.2c28.1-3.2 56.8-3.2 85 0l17.9 97 38.1 14.3c28.7 10.8 55.4 26.2 79.3 45.8l31.4 25.8 92.8-32.9c17 22.9 31.2 47.6 42.6 73.6L781.8 426l6.5 39.9zM512 326c-97.2 0-176 78.8-176 176s78.8 176 176 176 176-78.8 176-176-78.8-176-176-176zm79.2 255.2A111.6 111.6 0 01512 614c-29.9 0-58-11.7-79.2-32.8A111.6 111.6 0 01400 502c0-29.9 11.7-58 32.8-79.2C454 401.6 482.1 390 512 390c29.9 0 58 11.6 79.2 32.8A111.6 111.6 0 01624 502c0 29.9-11.7 58-32.8 79.2z"/></svg>
<div class="a" style="left:751.5px;top:307px;width:11px;height:18px;overflow:hidden"><div class="t" style="left:0;top:0;color:rgba(0,0,0,.25)">表达式</div></div>
<div class="a" style="left:65px;top:361px;width:808px;height:1px;background:#f0f0f0"></div>
<div class="a" style="left:73px;top:338px;width:16px;height:16px;border:1px solid #d9d9d9;border-radius:2px;background:#fff"></div>
<div class="t" style="left:112px;top:337.5px;font-size:13.7px">11</div>
<div class="a" style="left:211.5px;top:338px;width:92px;height:18px;overflow:hidden"><div class="t" style="left:0;top:0">波特率</div></div>
<div class="t" style="left:332px;top:337.5px;font-size:13.7px;letter-spacing:-.5px">U16BE</div>
<div class="t" style="left:392px;top:337.5px;font-size:13.7px">No Swap</div>
<div class="t" style="left:527.5px;top:337.5px;font-size:13.7px;letter-spacing:-.8px">DEC</div>
<svg class="a" style="left:574px;top:339px;" width="16" height="16" viewBox="0 0 1024 1024" fill="#222"><path d="M924.8 625.7l-65.5-56c3.1-19 4.7-38.4 4.7-57.8s-1.6-38.8-4.7-57.8l65.5-56a32.03 32.03 0 009.3-35.2l-.9-2.6a443.74 443.74 0 00-79.7-137.9l-1.8-2.1a32.12 32.12 0 00-35.1-9.5l-81.3 28.9c-30-24.6-63.5-44-99.7-57.6l-15.7-85a32.05 32.05 0 00-25.8-25.7l-2.7-.5c-52.1-9.4-106.9-9.4-159 0l-2.7.5a32.05 32.05 0 00-25.8 25.7l-15.8 85.4a351.86 351.86 0 00-99 57.4l-81.9-29.1a32 32 0 00-35.1 9.5l-1.8 2.1a446.02 446.02 0 00-79.7 137.9l-.9 2.6c-4.5 12.5-.8 26.5 9.3 35.2l66.3 56.6c-3.1 18.8-4.6 38-4.6 57.1 0 19.2 1.5 38.4 4.6 57.1L99 625.5a32.03 32.03 0 00-9.3 35.2l.9 2.6c18.1 50.4 44.9 96.9 79.7 137.9l1.8 2.1a32.12 32.12 0 0035.1 9.5l81.9-29.1c29.8 24.5 63.1 43.9 99 57.4l15.8 85.4a32.05 32.05 0 0025.8 25.7l2.7.5a449.4 449.4 0 00159 0l2.7-.5a32.05 32.05 0 0025.8-25.7l15.7-85a350 350 0 0099.7-57.6l81.3 28.9a32 32 0 0035.1-9.5l1.8-2.1c34.8-41.1 61.6-87.5 79.7-137.9l.9-2.6c4.5-12.3.8-26.3-9.3-35zM788.3 465.9c2.5 15.1 3.8 30.6 3.8 46.1s-1.3 31-3.8 46.1l-6.6 40.1 74.7 63.9a370.03 370.03 0 01-42.6 73.6L721 702.8l-31.4 25.8c-23.9 19.6-50.5 35-79.3 45.8l-38.1 14.3-17.9 97a377.5 377.5 0 01-85 0l-17.9-97.2-37.8-14.5c-28.5-10.8-55-26.2-78.7-45.7l-31.4-25.9-93.4 33.2c-17-22.9-31.2-47.6-42.6-73.6l75.5-64.5-6.5-40c-2.4-14.9-3.7-30.3-3.7-45.5 0-15.3 1.2-30.6 3.7-45.5l6.5-40-75.5-64.5c11.3-26.1 25.6-50.7 42.6-73.6l93.4 33.2 31.4-25.9c23.7-19.5 50.2-34.9 78.7-45.7l37.9-14.3 17.9-97.2c28.1-3.2 56.8-3.2 85 0l17.9 97 38.1 14.3c28.7 10.8 55.4 26.2 79.3 45.8l31.4 25.8 92.8-32.9c17 22.9 31.2 47.6 42.6 73.6L781.8 426l6.5 39.9zM512 326c-97.2 0-176 78.8-176 176s78.8 176 176 176 176-78.8 176-176-78.8-176-176-176zm79.2 255.2A111.6 111.6 0 01512 614c-29.9 0-58-11.7-79.2-32.8A111.6 111.6 0 01400 502c0-29.9 11.7-58 32.8-79.2C454 401.6 482.1 390 512 390c29.9 0 58 11.6 79.2 32.8A111.6 111.6 0 01624 502c0 29.9-11.7 58-32.8 79.2z"/></svg>
<div class="a" style="left:751.5px;top:338px;width:11px;height:18px;overflow:hidden"><div class="t" style="left:0;top:0;color:rgba(0,0,0,.25)">表达式</div></div>
<div class="a" style="left:65px;top:392px;width:808px;height:1px;background:#f0f0f0"></div>
<div class="a" style="left:73px;top:369px;width:16px;height:16px;border:1px solid #d9d9d9;border-radius:2px;background:#fff"></div>
<div class="t" style="left:112px;top:368.5px;font-size:13.7px">12</div>
<div class="a" style="left:211.5px;top:369px;width:92px;height:18px;overflow:hidden"><div class="t" style="left:0;top:0">返回延时</div></div>
<div class="t" style="left:332px;top:368.5px;font-size:13.7px;letter-spacing:-.5px">U16BE</div>
<div class="t" style="left:392px;top:368.5px;font-size:13.7px">No Swap</div>
<div class="t" style="left:527.5px;top:368.5px;font-size:13.7px;letter-spacing:-.8px">DEC</div>
<svg class="a" style="left:574px;top:370px;" width="16" height="16" viewBox="0 0 1024 1024" fill="#222"><path d="M924.8 625.7l-65.5-56c3.1-19 4.7-38.4 4.7-57.8s-1.6-38.8-4.7-57.8l65.5-56a32.03 32.03 0 009.3-35.2l-.9-2.6a443.74 443.74 0 00-79.7-137.9l-1.8-2.1a32.12 32.12 0 00-35.1-9.5l-81.3 28.9c-30-24.6-63.5-44-99.7-57.6l-15.7-85a32.05 32.05 0 00-25.8-25.7l-2.7-.5c-52.1-9.4-106.9-9.4-159 0l-2.7.5a32.05 32.05 0 00-25.8 25.7l-15.8 85.4a351.86 351.86 0 00-99 57.4l-81.9-29.1a32 32 0 00-35.1 9.5l-1.8 2.1a446.02 446.02 0 00-79.7 137.9l-.9 2.6c-4.5 12.5-.8 26.5 9.3 35.2l66.3 56.6c-3.1 18.8-4.6 38-4.6 57.1 0 19.2 1.5 38.4 4.6 57.1L99 625.5a32.03 32.03 0 00-9.3 35.2l.9 2.6c18.1 50.4 44.9 96.9 79.7 137.9l1.8 2.1a32.12 32.12 0 0035.1 9.5l81.9-29.1c29.8 24.5 63.1 43.9 99 57.4l15.8 85.4a32.05 32.05 0 0025.8 25.7l2.7.5a449.4 449.4 0 00159 0l2.7-.5a32.05 32.05 0 0025.8-25.7l15.7-85a350 350 0 0099.7-57.6l81.3 28.9a32 32 0 0035.1-9.5l1.8-2.1c34.8-41.1 61.6-87.5 79.7-137.9l.9-2.6c4.5-12.3.8-26.3-9.3-35zM788.3 465.9c2.5 15.1 3.8 30.6 3.8 46.1s-1.3 31-3.8 46.1l-6.6 40.1 74.7 63.9a370.03 370.03 0 01-42.6 73.6L721 702.8l-31.4 25.8c-23.9 19.6-50.5 35-79.3 45.8l-38.1 14.3-17.9 97a377.5 377.5 0 01-85 0l-17.9-97.2-37.8-14.5c-28.5-10.8-55-26.2-78.7-45.7l-31.4-25.9-93.4 33.2c-17-22.9-31.2-47.6-42.6-73.6l75.5-64.5-6.5-40c-2.4-14.9-3.7-30.3-3.7-45.5 0-15.3 1.2-30.6 3.7-45.5l6.5-40-75.5-64.5c11.3-26.1 25.6-50.7 42.6-73.6l93.4 33.2 31.4-25.9c23.7-19.5 50.2-34.9 78.7-45.7l37.9-14.3 17.9-97.2c28.1-3.2 56.8-3.2 85 0l17.9 97 38.1 14.3c28.7 10.8 55.4 26.2 79.3 45.8l31.4 25.8 92.8-32.9c17 22.9 31.2 47.6 42.6 73.6L781.8 426l6.5 39.9zM512 326c-97.2 0-176 78.8-176 176s78.8 176 176 176 176-78.8 176-176-78.8-176-176-176zm79.2 255.2A111.6 111.6 0 01512 614c-29.9 0-58-11.7-79.2-32.8A111.6 111.6 0 01400 502c0-29.9 11.7-58 32.8-79.2C454 401.6 482.1 390 512 390c29.9 0 58 11.6 79.2 32.8A111.6 111.6 0 01624 502c0 29.9-11.7 58-32.8 79.2z"/></svg>
<div class="a" style="left:751.5px;top:369px;width:11px;height:18px;overflow:hidden"><div class="t" style="left:0;top:0;color:rgba(0,0,0,.25)">表达式</div></div>
<div class="a" style="left:65px;top:423px;width:808px;height:1px;background:#f0f0f0"></div>
<div class="a" style="left:73px;top:400px;width:16px;height:16px;border:1px solid #d9d9d9;border-radius:2px;background:#fff"></div>
<div class="t" style="left:112px;top:399.5px;font-size:13.7px">13</div>
<div class="a" style="left:211.5px;top:400px;width:92px;height:18px;overflow:hidden"><div class="t" style="left:0;top:0">最小角度限制</div></div>
<div class="t" style="left:332px;top:399.5px;font-size:13.7px;letter-spacing:-.5px">U16BE</div>
<div class="t" style="left:392px;top:399.5px;font-size:13.7px">No Swap</div>
<div class="t" style="left:527.5px;top:399.5px;font-size:13.7px;letter-spacing:-.8px">DEC</div>
<svg class="a" style="left:574px;top:401px;" width="16" height="16" viewBox="0 0 1024 1024" fill="#222"><path d="M924.8 625.7l-65.5-56c3.1-19 4.7-38.4 4.7-57.8s-1.6-38.8-4.7-57.8l65.5-56a32.03 32.03 0 009.3-35.2l-.9-2.6a443.74 443.74 0 00-79.7-137.9l-1.8-2.1a32.12 32.12 0 00-35.1-9.5l-81.3 28.9c-30-24.6-63.5-44-99.7-57.6l-15.7-85a32.05 32.05 0 00-25.8-25.7l-2.7-.5c-52.1-9.4-106.9-9.4-159 0l-2.7.5a32.05 32.05 0 00-25.8 25.7l-15.8 85.4a351.86 351.86 0 00-99 57.4l-81.9-29.1a32 32 0 00-35.1 9.5l-1.8 2.1a446.02 446.02 0 00-79.7 137.9l-.9 2.6c-4.5 12.5-.8 26.5 9.3 35.2l66.3 56.6c-3.1 18.8-4.6 38-4.6 57.1 0 19.2 1.5 38.4 4.6 57.1L99 625.5a32.03 32.03 0 00-9.3 35.2l.9 2.6c18.1 50.4 44.9 96.9 79.7 137.9l1.8 2.1a32.12 32.12 0 0035.1 9.5l81.9-29.1c29.8 24.5 63.1 43.9 99 57.4l15.8 85.4a32.05 32.05 0 0025.8 25.7l2.7.5a449.4 449.4 0 00159 0l2.7-.5a32.05 32.05 0 0025.8-25.7l15.7-85a350 350 0 0099.7-57.6l81.3 28.9a32 32 0 0035.1-9.5l1.8-2.1c34.8-41.1 61.6-87.5 79.7-137.9l.9-2.6c4.5-12.3.8-26.3-9.3-35zM788.3 465.9c2.5 15.1 3.8 30.6 3.8 46.1s-1.3 31-3.8 46.1l-6.6 40.1 74.7 63.9a370.03 370.03 0 01-42.6 73.6L721 702.8l-31.4 25.8c-23.9 19.6-50.5 35-79.3 45.8l-38.1 14.3-17.9 97a377.5 377.5 0 01-85 0l-17.9-97.2-37.8-14.5c-28.5-10.8-55-26.2-78.7-45.7l-31.4-25.9-93.4 33.2c-17-22.9-31.2-47.6-42.6-73.6l75.5-64.5-6.5-40c-2.4-14.9-3.7-30.3-3.7-45.5 0-15.3 1.2-30.6 3.7-45.5l6.5-40-75.5-64.5c11.3-26.1 25.6-50.7 42.6-73.6l93.4 33.2 31.4-25.9c23.7-19.5 50.2-34.9 78.7-45.7l37.9-14.3 17.9-97.2c28.1-3.2 56.8-3.2 85 0l17.9 97 38.1 14.3c28.7 10.8 55.4 26.2 79.3 45.8l31.4 25.8 92.8-32.9c17 22.9 31.2 47.6 42.6 73.6L781.8 426l6.5 39.9zM512 326c-97.2 0-176 78.8-176 176s78.8 176 176 176 176-78.8 176-176-78.8-176-176-176zm79.2 255.2A111.6 111.6 0 01512 614c-29.9 0-58-11.7-79.2-32.8A111.6 111.6 0 01400 502c0-29.9 11.7-58 32.8-79.2C454 401.6 482.1 390 512 390c29.9 0 58 11.6 79.2 32.8A111.6 111.6 0 01624 502c0 29.9-11.7 58-32.8 79.2z"/></svg>
<div class="a" style="left:751.5px;top:400px;width:11px;height:18px;overflow:hidden"><div class="t" style="left:0;top:0;color:rgba(0,0,0,.25)">表达式</div></div>
<div class="a" style="left:65px;top:454px;width:808px;height:1px;background:#f0f0f0"></div>
<div class="a" style="left:73px;top:431px;width:16px;height:16px;border:1px solid #d9d9d9;border-radius:2px;background:#fff"></div>
<div class="t" style="left:112px;top:430.5px;font-size:13.7px">14</div>
<div class="a" style="left:211.5px;top:431px;width:92px;height:18px;overflow:hidden"><div class="t" style="left:0;top:0">最大角度限制</div></div>
<div class="t" style="left:332px;top:430.5px;font-size:13.7px;letter-spacing:-.5px">U16BE</div>
<div class="t" style="left:392px;top:430.5px;font-size:13.7px">No Swap</div>
<div class="t" style="left:527.5px;top:430.5px;font-size:13.7px;letter-spacing:-.8px">DEC</div>
<svg class="a" style="left:574px;top:432px;" width="16" height="16" viewBox="0 0 1024 1024" fill="#222"><path d="M924.8 625.7l-65.5-56c3.1-19 4.7-38.4 4.7-57.8s-1.6-38.8-4.7-57.8l65.5-56a32.03 32.03 0 009.3-35.2l-.9-2.6a443.74 443.74 0 00-79.7-137.9l-1.8-2.1a32.12 32.12 0 00-35.1-9.5l-81.3 28.9c-30-24.6-63.5-44-99.7-57.6l-15.7-85a32.05 32.05 0 00-25.8-25.7l-2.7-.5c-52.1-9.4-106.9-9.4-159 0l-2.7.5a32.05 32.05 0 00-25.8 25.7l-15.8 85.4a351.86 351.86 0 00-99 57.4l-81.9-29.1a32 32 0 00-35.1 9.5l-1.8 2.1a446.02 446.02 0 00-79.7 137.9l-.9 2.6c-4.5 12.5-.8 26.5 9.3 35.2l66.3 56.6c-3.1 18.8-4.6 38-4.6 57.1 0 19.2 1.5 38.4 4.6 57.1L99 625.5a32.03 32.03 0 00-9.3 35.2l.9 2.6c18.1 50.4 44.9 96.9 79.7 137.9l1.8 2.1a32.12 32.12 0 0035.1 9.5l81.9-29.1c29.8 24.5 63.1 43.9 99 57.4l15.8 85.4a32.05 32.05 0 0025.8 25.7l2.7.5a449.4 449.4 0 00159 0l2.7-.5a32.05 32.05 0 0025.8-25.7l15.7-85a350 350 0 0099.7-57.6l81.3 28.9a32 32 0 0035.1-9.5l1.8-2.1c34.8-41.1 61.6-87.5 79.7-137.9l.9-2.6c4.5-12.3.8-26.3-9.3-35zM788.3 465.9c2.5 15.1 3.8 30.6 3.8 46.1s-1.3 31-3.8 46.1l-6.6 40.1 74.7 63.9a370.03 370.03 0 01-42.6 73.6L721 702.8l-31.4 25.8c-23.9 19.6-50.5 35-79.3 45.8l-38.1 14.3-17.9 97a377.5 377.5 0 01-85 0l-17.9-97.2-37.8-14.5c-28.5-10.8-55-26.2-78.7-45.7l-31.4-25.9-93.4 33.2c-17-22.9-31.2-47.6-42.6-73.6l75.5-64.5-6.5-40c-2.4-14.9-3.7-30.3-3.7-45.5 0-15.3 1.2-30.6 3.7-45.5l6.5-40-75.5-64.5c11.3-26.1 25.6-50.7 42.6-73.6l93.4 33.2 31.4-25.9c23.7-19.5 50.2-34.9 78.7-45.7l37.9-14.3 17.9-97.2c28.1-3.2 56.8-3.2 85 0l17.9 97 38.1 14.3c28.7 10.8 55.4 26.2 79.3 45.8l31.4 25.8 92.8-32.9c17 22.9 31.2 47.6 42.6 73.6L781.8 426l6.5 39.9zM512 326c-97.2 0-176 78.8-176 176s78.8 176 176 176 176-78.8 176-176-78.8-176-176-176zm79.2 255.2A111.6 111.6 0 01512 614c-29.9 0-58-11.7-79.2-32.8A111.6 111.6 0 01400 502c0-29.9 11.7-58 32.8-79.2C454 401.6 482.1 390 512 390c29.9 0 58 11.6 79.2 32.8A111.6 111.6 0 01624 502c0 29.9-11.7 58-32.8 79.2z"/></svg>
<div class="a" style="left:751.5px;top:431px;width:11px;height:18px;overflow:hidden"><div class="t" style="left:0;top:0;color:rgba(0,0,0,.25)">表达式</div></div>
<div class="a" style="left:65px;top:485px;width:808px;height:1px;background:#f0f0f0"></div>
<div class="a" style="left:73px;top:462px;width:16px;height:16px;border:1px solid #d9d9d9;border-radius:2px;background:#fff"></div>
<div class="t" style="left:112px;top:461.5px;font-size:13.7px">15</div>
<div class="a" style="left:211.5px;top:462px;width:92px;height:18px;overflow:hidden"><div class="t" style="left:0;top:0">位置校正</div></div>
<div class="t" style="left:332px;top:461.5px;font-size:13.7px;letter-spacing:-.5px">U16BE</div>
<div class="t" style="left:392px;top:461.5px;font-size:13.7px">No Swap</div>
<div class="t" style="left:527.5px;top:461.5px;font-size:13.7px;letter-spacing:-.8px">DEC</div>
<svg class="a" style="left:574px;top:463px;" width="16" height="16" viewBox="0 0 1024 1024" fill="#222"><path d="M924.8 625.7l-65.5-56c3.1-19 4.7-38.4 4.7-57.8s-1.6-38.8-4.7-57.8l65.5-56a32.03 32.03 0 009.3-35.2l-.9-2.6a443.74 443.74 0 00-79.7-137.9l-1.8-2.1a32.12 32.12 0 00-35.1-9.5l-81.3 28.9c-30-24.6-63.5-44-99.7-57.6l-15.7-85a32.05 32.05 0 00-25.8-25.7l-2.7-.5c-52.1-9.4-106.9-9.4-159 0l-2.7.5a32.05 32.05 0 00-25.8 25.7l-15.8 85.4a351.86 351.86 0 00-99 57.4l-81.9-29.1a32 32 0 00-35.1 9.5l-1.8 2.1a446.02 446.02 0 00-79.7 137.9l-.9 2.6c-4.5 12.5-.8 26.5 9.3 35.2l66.3 56.6c-3.1 18.8-4.6 38-4.6 57.1 0 19.2 1.5 38.4 4.6 57.1L99 625.5a32.03 32.03 0 00-9.3 35.2l.9 2.6c18.1 50.4 44.9 96.9 79.7 137.9l1.8 2.1a32.12 32.12 0 0035.1 9.5l81.9-29.1c29.8 24.5 63.1 43.9 99 57.4l15.8 85.4a32.05 32.05 0 0025.8 25.7l2.7.5a449.4 449.4 0 00159 0l2.7-.5a32.05 32.05 0 0025.8-25.7l15.7-85a350 350 0 0099.7-57.6l81.3 28.9a32 32 0 0035.1-9.5l1.8-2.1c34.8-41.1 61.6-87.5 79.7-137.9l.9-2.6c4.5-12.3.8-26.3-9.3-35zM788.3 465.9c2.5 15.1 3.8 30.6 3.8 46.1s-1.3 31-3.8 46.1l-6.6 40.1 74.7 63.9a370.03 370.03 0 01-42.6 73.6L721 702.8l-31.4 25.8c-23.9 19.6-50.5 35-79.3 45.8l-38.1 14.3-17.9 97a377.5 377.5 0 01-85 0l-17.9-97.2-37.8-14.5c-28.5-10.8-55-26.2-78.7-45.7l-31.4-25.9-93.4 33.2c-17-22.9-31.2-47.6-42.6-73.6l75.5-64.5-6.5-40c-2.4-14.9-3.7-30.3-3.7-45.5 0-15.3 1.2-30.6 3.7-45.5l6.5-40-75.5-64.5c11.3-26.1 25.6-50.7 42.6-73.6l93.4 33.2 31.4-25.9c23.7-19.5 50.2-34.9 78.7-45.7l37.9-14.3 17.9-97.2c28.1-3.2 56.8-3.2 85 0l17.9 97 38.1 14.3c28.7 10.8 55.4 26.2 79.3 45.8l31.4 25.8 92.8-32.9c17 22.9 31.2 47.6 42.6 73.6L781.8 426l6.5 39.9zM512 326c-97.2 0-176 78.8-176 176s78.8 176 176 176 176-78.8 176-176-78.8-176-176-176zm79.2 255.2A111.6 111.6 0 01512 614c-29.9 0-58-11.7-79.2-32.8A111.6 111.6 0 01400 502c0-29.9 11.7-58 32.8-79.2C454 401.6 482.1 390 512 390c29.9 0 58 11.6 79.2 32.8A111.6 111.6 0 01624 502c0 29.9-11.7 58-32.8 79.2z"/></svg>
<div class="a" style="left:751.5px;top:462px;width:11px;height:18px;overflow:hidden"><div class="t" style="left:0;top:0;color:rgba(0,0,0,.25)">表达式</div></div>
<div class="a" style="left:65px;top:516px;width:808px;height:1px;background:#f0f0f0"></div>
<div class="a" style="left:73px;top:493px;width:16px;height:16px;border:1px solid #d9d9d9;border-radius:2px;background:#fff"></div>
<div class="t" style="left:112px;top:492.5px;font-size:13.7px">16</div>
<div class="a" style="left:211.5px;top:493px;width:92px;height:18px;overflow:hidden"><div class="t" style="left:0;top:0">运行模式</div></div>
<div class="t" style="left:332px;top:492.5px;font-size:13.7px;letter-spacing:-.5px">U16BE</div>
<div class="t" style="left:392px;top:492.5px;font-size:13.7px">No Swap</div>
<div class="t" style="left:527.5px;top:492.5px;font-size:13.7px;letter-spacing:-.8px">DEC</div>
<svg class="a" style="left:574px;top:494px;" width="16" height="16" viewBox="0 0 1024 1024" fill="#222"><path d="M924.8 625.7l-65.5-56c3.1-19 4.7-38.4 4.7-57.8s-1.6-38.8-4.7-57.8l65.5-56a32.03 32.03 0 009.3-35.2l-.9-2.6a443.74 443.74 0 00-79.7-137.9l-1.8-2.1a32.12 32.12 0 00-35.1-9.5l-81.3 28.9c-30-24.6-63.5-44-99.7-57.6l-15.7-85a32.05 32.05 0 00-25.8-25.7l-2.7-.5c-52.1-9.4-106.9-9.4-159 0l-2.7.5a32.05 32.05 0 00-25.8 25.7l-15.8 85.4a351.86 351.86 0 00-99 57.4l-81.9-29.1a32 32 0 00-35.1 9.5l-1.8 2.1a446.02 446.02 0 00-79.7 137.9l-.9 2.6c-4.5 12.5-.8 26.5 9.3 35.2l66.3 56.6c-3.1 18.8-4.6 38-4.6 57.1 0 19.2 1.5 38.4 4.6 57.1L99 625.5a32.03 32.03 0 00-9.3 35.2l.9 2.6c18.1 50.4 44.9 96.9 79.7 137.9l1.8 2.1a32.12 32.12 0 0035.1 9.5l81.9-29.1c29.8 24.5 63.1 43.9 99 57.4l15.8 85.4a32.05 32.05 0 0025.8 25.7l2.7.5a449.4 449.4 0 00159 0l2.7-.5a32.05 32.05 0 0025.8-25.7l15.7-85a350 350 0 0099.7-57.6l81.3 28.9a32 32 0 0035.1-9.5l1.8-2.1c34.8-41.1 61.6-87.5 79.7-137.9l.9-2.6c4.5-12.3.8-26.3-9.3-35zM788.3 465.9c2.5 15.1 3.8 30.6 3.8 46.1s-1.3 31-3.8 46.1l-6.6 40.1 74.7 63.9a370.03 370.03 0 01-42.6 73.6L721 702.8l-31.4 25.8c-23.9 19.6-50.5 35-79.3 45.8l-38.1 14.3-17.9 97a377.5 377.5 0 01-85 0l-17.9-97.2-37.8-14.5c-28.5-10.8-55-26.2-78.7-45.7l-31.4-25.9-93.4 33.2c-17-22.9-31.2-47.6-42.6-73.6l75.5-64.5-6.5-40c-2.4-14.9-3.7-30.3-3.7-45.5 0-15.3 1.2-30.6 3.7-45.5l6.5-40-75.5-64.5c11.3-26.1 25.6-50.7 42.6-73.6l93.4 33.2 31.4-25.9c23.7-19.5 50.2-34.9 78.7-45.7l37.9-14.3 17.9-97.2c28.1-3.2 56.8-3.2 85 0l17.9 97 38.1 14.3c28.7 10.8 55.4 26.2 79.3 45.8l31.4 25.8 92.8-32.9c17 22.9 31.2 47.6 42.6 73.6L781.8 426l6.5 39.9zM512 326c-97.2 0-176 78.8-176 176s78.8 176 176 176 176-78.8 176-176-78.8-176-176-176zm79.2 255.2A111.6 111.6 0 01512 614c-29.9 0-58-11.7-79.2-32.8A111.6 111.6 0 01400 502c0-29.9 11.7-58 32.8-79.2C454 401.6 482.1 390 512 390c29.9 0 58 11.6 79.2 32.8A111.6 111.6 0 01624 502c0 29.9-11.7 58-32.8 79.2z"/></svg>
<div class="a" style="left:751.5px;top:493px;width:11px;height:18px;overflow:hidden"><div class="t" style="left:0;top:0;color:rgba(0,0,0,.25)">表达式</div></div>
<div class="a" style="left:65px;top:547px;width:808px;height:1px;background:#f0f0f0"></div>
<div class="a" style="left:73px;top:524px;width:16px;height:16px;border:1px solid #d9d9d9;border-radius:2px;background:#fff"></div>
<div class="t" style="left:112px;top:523.5px;font-size:13.7px">17</div>
<div class="a" style="left:211.5px;top:524px;width:92px;height:18px;overflow:hidden"><div class="t" style="left:0;top:0">位置闭环P 比例</div></div>
<div class="t" style="left:332px;top:523.5px;font-size:13.7px;letter-spacing:-.5px">U16BE</div>
<div class="t" style="left:392px;top:523.5px;font-size:13.7px">No Swap</div>
<div class="t" style="left:527.5px;top:523.5px;font-size:13.7px;letter-spacing:-.8px">DEC</div>
<svg class="a" style="left:574px;top:525px;" width="16" height="16" viewBox="0 0 1024 1024" fill="#222"><path d="M924.8 625.7l-65.5-56c3.1-19 4.7-38.4 4.7-57.8s-1.6-38.8-4.7-57.8l65.5-56a32.03 32.03 0 009.3-35.2l-.9-2.6a443.74 443.74 0 00-79.7-137.9l-1.8-2.1a32.12 32.12 0 00-35.1-9.5l-81.3 28.9c-30-24.6-63.5-44-99.7-57.6l-15.7-85a32.05 32.05 0 00-25.8-25.7l-2.7-.5c-52.1-9.4-106.9-9.4-159 0l-2.7.5a32.05 32.05 0 00-25.8 25.7l-15.8 85.4a351.86 351.86 0 00-99 57.4l-81.9-29.1a32 32 0 00-35.1 9.5l-1.8 2.1a446.02 446.02 0 00-79.7 137.9l-.9 2.6c-4.5 12.5-.8 26.5 9.3 35.2l66.3 56.6c-3.1 18.8-4.6 38-4.6 57.1 0 19.2 1.5 38.4 4.6 57.1L99 625.5a32.03 32.03 0 00-9.3 35.2l.9 2.6c18.1 50.4 44.9 96.9 79.7 137.9l1.8 2.1a32.12 32.12 0 0035.1 9.5l81.9-29.1c29.8 24.5 63.1 43.9 99 57.4l15.8 85.4a32.05 32.05 0 0025.8 25.7l2.7.5a449.4 449.4 0 00159 0l2.7-.5a32.05 32.05 0 0025.8-25.7l15.7-85a350 350 0 0099.7-57.6l81.3 28.9a32 32 0 0035.1-9.5l1.8-2.1c34.8-41.1 61.6-87.5 79.7-137.9l.9-2.6c4.5-12.3.8-26.3-9.3-35zM788.3 465.9c2.5 15.1 3.8 30.6 3.8 46.1s-1.3 31-3.8 46.1l-6.6 40.1 74.7 63.9a370.03 370.03 0 01-42.6 73.6L721 702.8l-31.4 25.8c-23.9 19.6-50.5 35-79.3 45.8l-38.1 14.3-17.9 97a377.5 377.5 0 01-85 0l-17.9-97.2-37.8-14.5c-28.5-10.8-55-26.2-78.7-45.7l-31.4-25.9-93.4 33.2c-17-22.9-31.2-47.6-42.6-73.6l75.5-64.5-6.5-40c-2.4-14.9-3.7-30.3-3.7-45.5 0-15.3 1.2-30.6 3.7-45.5l6.5-40-75.5-64.5c11.3-26.1 25.6-50.7 42.6-73.6l93.4 33.2 31.4-25.9c23.7-19.5 50.2-34.9 78.7-45.7l37.9-14.3 17.9-97.2c28.1-3.2 56.8-3.2 85 0l17.9 97 38.1 14.3c28.7 10.8 55.4 26.2 79.3 45.8l31.4 25.8 92.8-32.9c17 22.9 31.2 47.6 42.6 73.6L781.8 426l6.5 39.9zM512 326c-97.2 0-176 78.8-176 176s78.8 176 176 176 176-78.8 176-176-78.8-176-176-176zm79.2 255.2A111.6 111.6 0 01512 614c-29.9 0-58-11.7-79.2-32.8A111.6 111.6 0 01400 502c0-29.9 11.7-58 32.8-79.2C454 401.6 482.1 390 512 390c29.9 0 58 11.6 79.2 32.8A111.6 111.6 0 01624 502c0 29.9-11.7 58-32.8 79.2z"/></svg>
<div class="a" style="left:751.5px;top:524px;width:11px;height:18px;overflow:hidden"><div class="t" style="left:0;top:0;color:rgba(0,0,0,.25)">表达式</div></div>
<div class="a" style="left:755px;top:176px;width:8px;height:378px;background:linear-gradient(to right,rgba(0,0,0,0),rgba(0,0,0,.07))"></div>
<div class="a" style="left:763px;top:176px;width:110px;height:378px;background:#fff"></div>
<div class="a" style="left:763px;top:206px;width:110px;height:1px;background:#f0f0f0"></div>
<svg class="a" style="left:782px;top:184px;" width="16" height="16" viewBox="0 0 1024 1024" fill="#222"><path d="M909.3 506.3L781.7 405.6a7.23 7.23 0 00-11.7 5.7V476H548V254h64.8c6 0 9.4-7 5.7-11.7L517.7 114.7a7.14 7.14 0 00-11.3 0L405.6 242.3a7.23 7.23 0 005.7 11.7H476v222H254v-64.8c0-6-7-9.4-11.7-5.7L114.7 506.3a7.14 7.14 0 000 11.3l127.5 100.8c4.7 3.7 11.7.4 11.7-5.7V548h222v222h-64.8c-6 0-9.4 7-5.7 11.7l100.8 127.5c2.9 3.7 8.5 3.7 11.3 0l100.8-127.5c3.7-4.7.4-11.7-5.7-11.7H548V548h222v64.8c0 6 7 9.4 11.7 5.7l127.5-100.8a7.3 7.3 0 00.1-11.4z"/></svg>
<svg class="a" style="left:812px;top:184px;" width="16" height="16" viewBox="0 0 1024 1024" fill="#c8c8c8"><path d="M888 792H200V168c0-4.4-3.6-8-8-8h-56c-4.4 0-8 3.6-8 8v688c0 4.4 3.6 8 8 8h752c4.4 0 8-3.6 8-8v-56c0-4.4-3.6-8-8-8zM305.8 637.7c3.1 3.1 8.1 3.1 11.3 0l138.3-137.6L632.5 677c3.1 3.1 8.2 3.1 11.3 0l310.2-310.4c3.1-3.1 3.1-8.2 0-11.3l-39.6-39.6a8.03 8.03 0 00-11.3 0l-264.4 264.6-177-177a8.03 8.03 0 00-11.3 0L266.3 586.7a8.03 8.03 0 000 11.3l39.5 39.7z"/></svg>
<svg class="a" style="left:842px;top:184px;" width="16" height="16" viewBox="0 0 1024 1024" fill="#222"><path d="M360 184h-8c4.4 0 8-3.6 8-8v8h304v-8c0 4.4 3.6 8 8 8h-8v72h72v-80c0-35.3-28.7-64-64-64H352c-35.3 0-64 28.7-64 64v80h72v-72zm504 72H160c-17.7 0-32 14.3-32 32v32c0 4.4 3.6 8 8 8h60.4l24.7 523c1.6 34.1 29.8 61 63.9 61h454c34.2 0 62.3-26.8 63.9-61l24.7-523H888c4.4 0 8-3.6 8-8v-32c0-17.7-14.3-32-32-32zM731.3 840H292.7l-24.2-512h487l-24.2 512z"/></svg>
<div class="a" style="left:763px;top:237px;width:110px;height:1px;background:#f0f0f0"></div>
<svg class="a" style="left:782px;top:215px;" width="16" height="16" viewBox="0 0 1024 1024" fill="#222"><path d="M909.3 506.3L781.7 405.6a7.23 7.23 0 00-11.7 5.7V476H548V254h64.8c6 0 9.4-7 5.7-11.7L517.7 114.7a7.14 7.14 0 00-11.3 0L405.6 242.3a7.23 7.23 0 005.7 11.7H476v222H254v-64.8c0-6-7-9.4-11.7-5.7L114.7 506.3a7.14 7.14 0 000 11.3l127.5 100.8c4.7 3.7 11.7.4 11.7-5.7V548h222v222h-64.8c-6 0-9.4 7-5.7 11.7l100.8 127.5c2.9 3.7 8.5 3.7 11.3 0l100.8-127.5c3.7-4.7.4-11.7-5.7-11.7H548V548h222v64.8c0 6 7 9.4 11.7 5.7l127.5-100.8a7.3 7.3 0 00.1-11.4z"/></svg>
<svg class="a" style="left:812px;top:215px;" width="16" height="16" viewBox="0 0 1024 1024" fill="#c8c8c8"><path d="M888 792H200V168c0-4.4-3.6-8-8-8h-56c-4.4 0-8 3.6-8 8v688c0 4.4 3.6 8 8 8h752c4.4 0 8-3.6 8-8v-56c0-4.4-3.6-8-8-8zM305.8 637.7c3.1 3.1 8.1 3.1 11.3 0l138.3-137.6L632.5 677c3.1 3.1 8.2 3.1 11.3 0l310.2-310.4c3.1-3.1 3.1-8.2 0-11.3l-39.6-39.6a8.03 8.03 0 00-11.3 0l-264.4 264.6-177-177a8.03 8.03 0 00-11.3 0L266.3 586.7a8.03 8.03 0 000 11.3l39.5 39.7z"/></svg>
<svg class="a" style="left:842px;top:215px;" width="16" height="16" viewBox="0 0 1024 1024" fill="#222"><path d="M360 184h-8c4.4 0 8-3.6 8-8v8h304v-8c0 4.4 3.6 8 8 8h-8v72h72v-80c0-35.3-28.7-64-64-64H352c-35.3 0-64 28.7-64 64v80h72v-72zm504 72H160c-17.7 0-32 14.3-32 32v32c0 4.4 3.6 8 8 8h60.4l24.7 523c1.6 34.1 29.8 61 63.9 61h454c34.2 0 62.3-26.8 63.9-61l24.7-523H888c4.4 0 8-3.6 8-8v-32c0-17.7-14.3-32-32-32zM731.3 840H292.7l-24.2-512h487l-24.2 512z"/></svg>
<div class="a" style="left:763px;top:268px;width:110px;height:1px;background:#f0f0f0"></div>
<svg class="a" style="left:782px;top:246px;" width="16" height="16" viewBox="0 0 1024 1024" fill="#222"><path d="M909.3 506.3L781.7 405.6a7.23 7.23 0 00-11.7 5.7V476H548V254h64.8c6 0 9.4-7 5.7-11.7L517.7 114.7a7.14 7.14 0 00-11.3 0L405.6 242.3a7.23 7.23 0 005.7 11.7H476v222H254v-64.8c0-6-7-9.4-11.7-5.7L114.7 506.3a7.14 7.14 0 000 11.3l127.5 100.8c4.7 3.7 11.7.4 11.7-5.7V548h222v222h-64.8c-6 0-9.4 7-5.7 11.7l100.8 127.5c2.9 3.7 8.5 3.7 11.3 0l100.8-127.5c3.7-4.7.4-11.7-5.7-11.7H548V548h222v64.8c0 6 7 9.4 11.7 5.7l127.5-100.8a7.3 7.3 0 00.1-11.4z"/></svg>
<svg class="a" style="left:812px;top:246px;" width="16" height="16" viewBox="0 0 1024 1024" fill="#c8c8c8"><path d="M888 792H200V168c0-4.4-3.6-8-8-8h-56c-4.4 0-8 3.6-8 8v688c0 4.4 3.6 8 8 8h752c4.4 0 8-3.6 8-8v-56c0-4.4-3.6-8-8-8zM305.8 637.7c3.1 3.1 8.1 3.1 11.3 0l138.3-137.6L632.5 677c3.1 3.1 8.2 3.1 11.3 0l310.2-310.4c3.1-3.1 3.1-8.2 0-11.3l-39.6-39.6a8.03 8.03 0 00-11.3 0l-264.4 264.6-177-177a8.03 8.03 0 00-11.3 0L266.3 586.7a8.03 8.03 0 000 11.3l39.5 39.7z"/></svg>
<svg class="a" style="left:842px;top:246px;" width="16" height="16" viewBox="0 0 1024 1024" fill="#222"><path d="M360 184h-8c4.4 0 8-3.6 8-8v8h304v-8c0 4.4 3.6 8 8 8h-8v72h72v-80c0-35.3-28.7-64-64-64H352c-35.3 0-64 28.7-64 64v80h72v-72zm504 72H160c-17.7 0-32 14.3-32 32v32c0 4.4 3.6 8 8 8h60.4l24.7 523c1.6 34.1 29.8 61 63.9 61h454c34.2 0 62.3-26.8 63.9-61l24.7-523H888c4.4 0 8-3.6 8-8v-32c0-17.7-14.3-32-32-32zM731.3 840H292.7l-24.2-512h487l-24.2 512z"/></svg>
<div class="a" style="left:763px;top:299px;width:110px;height:1px;background:#f0f0f0"></div>
<svg class="a" style="left:782px;top:277px;" width="16" height="16" viewBox="0 0 1024 1024" fill="#222"><path d="M909.3 506.3L781.7 405.6a7.23 7.23 0 00-11.7 5.7V476H548V254h64.8c6 0 9.4-7 5.7-11.7L517.7 114.7a7.14 7.14 0 00-11.3 0L405.6 242.3a7.23 7.23 0 005.7 11.7H476v222H254v-64.8c0-6-7-9.4-11.7-5.7L114.7 506.3a7.14 7.14 0 000 11.3l127.5 100.8c4.7 3.7 11.7.4 11.7-5.7V548h222v222h-64.8c-6 0-9.4 7-5.7 11.7l100.8 127.5c2.9 3.7 8.5 3.7 11.3 0l100.8-127.5c3.7-4.7.4-11.7-5.7-11.7H548V548h222v64.8c0 6 7 9.4 11.7 5.7l127.5-100.8a7.3 7.3 0 00.1-11.4z"/></svg>
<svg class="a" style="left:812px;top:277px;" width="16" height="16" viewBox="0 0 1024 1024" fill="#c8c8c8"><path d="M888 792H200V168c0-4.4-3.6-8-8-8h-56c-4.4 0-8 3.6-8 8v688c0 4.4 3.6 8 8 8h752c4.4 0 8-3.6 8-8v-56c0-4.4-3.6-8-8-8zM305.8 637.7c3.1 3.1 8.1 3.1 11.3 0l138.3-137.6L632.5 677c3.1 3.1 8.2 3.1 11.3 0l310.2-310.4c3.1-3.1 3.1-8.2 0-11.3l-39.6-39.6a8.03 8.03 0 00-11.3 0l-264.4 264.6-177-177a8.03 8.03 0 00-11.3 0L266.3 586.7a8.03 8.03 0 000 11.3l39.5 39.7z"/></svg>
<svg class="a" style="left:842px;top:277px;" width="16" height="16" viewBox="0 0 1024 1024" fill="#222"><path d="M360 184h-8c4.4 0 8-3.6 8-8v8h304v-8c0 4.4 3.6 8 8 8h-8v72h72v-80c0-35.3-28.7-64-64-64H352c-35.3 0-64 28.7-64 64v80h72v-72zm504 72H160c-17.7 0-32 14.3-32 32v32c0 4.4 3.6 8 8 8h60.4l24.7 523c1.6 34.1 29.8 61 63.9 61h454c34.2 0 62.3-26.8 63.9-61l24.7-523H888c4.4 0 8-3.6 8-8v-32c0-17.7-14.3-32-32-32zM731.3 840H292.7l-24.2-512h487l-24.2 512z"/></svg>
<div class="a" style="left:763px;top:330px;width:110px;height:1px;background:#f0f0f0"></div>
<svg class="a" style="left:782px;top:308px;" width="16" height="16" viewBox="0 0 1024 1024" fill="#222"><path d="M909.3 506.3L781.7 405.6a7.23 7.23 0 00-11.7 5.7V476H548V254h64.8c6 0 9.4-7 5.7-11.7L517.7 114.7a7.14 7.14 0 00-11.3 0L405.6 242.3a7.23 7.23 0 005.7 11.7H476v222H254v-64.8c0-6-7-9.4-11.7-5.7L114.7 506.3a7.14 7.14 0 000 11.3l127.5 100.8c4.7 3.7 11.7.4 11.7-5.7V548h222v222h-64.8c-6 0-9.4 7-5.7 11.7l100.8 127.5c2.9 3.7 8.5 3.7 11.3 0l100.8-127.5c3.7-4.7.4-11.7-5.7-11.7H548V548h222v64.8c0 6 7 9.4 11.7 5.7l127.5-100.8a7.3 7.3 0 00.1-11.4z"/></svg>
<svg class="a" style="left:812px;top:308px;" width="16" height="16" viewBox="0 0 1024 1024" fill="#c8c8c8"><path d="M888 792H200V168c0-4.4-3.6-8-8-8h-56c-4.4 0-8 3.6-8 8v688c0 4.4 3.6 8 8 8h752c4.4 0 8-3.6 8-8v-56c0-4.4-3.6-8-8-8zM305.8 637.7c3.1 3.1 8.1 3.1 11.3 0l138.3-137.6L632.5 677c3.1 3.1 8.2 3.1 11.3 0l310.2-310.4c3.1-3.1 3.1-8.2 0-11.3l-39.6-39.6a8.03 8.03 0 00-11.3 0l-264.4 264.6-177-177a8.03 8.03 0 00-11.3 0L266.3 586.7a8.03 8.03 0 000 11.3l39.5 39.7z"/></svg>
<svg class="a" style="left:842px;top:308px;" width="16" height="16" viewBox="0 0 1024 1024" fill="#222"><path d="M360 184h-8c4.4 0 8-3.6 8-8v8h304v-8c0 4.4 3.6 8 8 8h-8v72h72v-80c0-35.3-28.7-64-64-64H352c-35.3 0-64 28.7-64 64v80h72v-72zm504 72H160c-17.7 0-32 14.3-32 32v32c0 4.4 3.6 8 8 8h60.4l24.7 523c1.6 34.1 29.8 61 63.9 61h454c34.2 0 62.3-26.8 63.9-61l24.7-523H888c4.4 0 8-3.6 8-8v-32c0-17.7-14.3-32-32-32zM731.3 840H292.7l-24.2-512h487l-24.2 512z"/></svg>
<div class="a" style="left:763px;top:361px;width:110px;height:1px;background:#f0f0f0"></div>
<svg class="a" style="left:782px;top:339px;" width="16" height="16" viewBox="0 0 1024 1024" fill="#222"><path d="M909.3 506.3L781.7 405.6a7.23 7.23 0 00-11.7 5.7V476H548V254h64.8c6 0 9.4-7 5.7-11.7L517.7 114.7a7.14 7.14 0 00-11.3 0L405.6 242.3a7.23 7.23 0 005.7 11.7H476v222H254v-64.8c0-6-7-9.4-11.7-5.7L114.7 506.3a7.14 7.14 0 000 11.3l127.5 100.8c4.7 3.7 11.7.4 11.7-5.7V548h222v222h-64.8c-6 0-9.4 7-5.7 11.7l100.8 127.5c2.9 3.7 8.5 3.7 11.3 0l100.8-127.5c3.7-4.7.4-11.7-5.7-11.7H548V548h222v64.8c0 6 7 9.4 11.7 5.7l127.5-100.8a7.3 7.3 0 00.1-11.4z"/></svg>
<svg class="a" style="left:812px;top:339px;" width="16" height="16" viewBox="0 0 1024 1024" fill="#c8c8c8"><path d="M888 792H200V168c0-4.4-3.6-8-8-8h-56c-4.4 0-8 3.6-8 8v688c0 4.4 3.6 8 8 8h752c4.4 0 8-3.6 8-8v-56c0-4.4-3.6-8-8-8zM305.8 637.7c3.1 3.1 8.1 3.1 11.3 0l138.3-137.6L632.5 677c3.1 3.1 8.2 3.1 11.3 0l310.2-310.4c3.1-3.1 3.1-8.2 0-11.3l-39.6-39.6a8.03 8.03 0 00-11.3 0l-264.4 264.6-177-177a8.03 8.03 0 00-11.3 0L266.3 586.7a8.03 8.03 0 000 11.3l39.5 39.7z"/></svg>
<svg class="a" style="left:842px;top:339px;" width="16" height="16" viewBox="0 0 1024 1024" fill="#222"><path d="M360 184h-8c4.4 0 8-3.6 8-8v8h304v-8c0 4.4 3.6 8 8 8h-8v72h72v-80c0-35.3-28.7-64-64-64H352c-35.3 0-64 28.7-64 64v80h72v-72zm504 72H160c-17.7 0-32 14.3-32 32v32c0 4.4 3.6 8 8 8h60.4l24.7 523c1.6 34.1 29.8 61 63.9 61h454c34.2 0 62.3-26.8 63.9-61l24.7-523H888c4.4 0 8-3.6 8-8v-32c0-17.7-14.3-32-32-32zM731.3 840H292.7l-24.2-512h487l-24.2 512z"/></svg>
<div class="a" style="left:763px;top:392px;width:110px;height:1px;background:#f0f0f0"></div>
<svg class="a" style="left:782px;top:370px;" width="16" height="16" viewBox="0 0 1024 1024" fill="#222"><path d="M909.3 506.3L781.7 405.6a7.23 7.23 0 00-11.7 5.7V476H548V254h64.8c6 0 9.4-7 5.7-11.7L517.7 114.7a7.14 7.14 0 00-11.3 0L405.6 242.3a7.23 7.23 0 005.7 11.7H476v222H254v-64.8c0-6-7-9.4-11.7-5.7L114.7 506.3a7.14 7.14 0 000 11.3l127.5 100.8c4.7 3.7 11.7.4 11.7-5.7V548h222v222h-64.8c-6 0-9.4 7-5.7 11.7l100.8 127.5c2.9 3.7 8.5 3.7 11.3 0l100.8-127.5c3.7-4.7.4-11.7-5.7-11.7H548V548h222v64.8c0 6 7 9.4 11.7 5.7l127.5-100.8a7.3 7.3 0 00.1-11.4z"/></svg>
<svg class="a" style="left:812px;top:370px;" width="16" height="16" viewBox="0 0 1024 1024" fill="#c8c8c8"><path d="M888 792H200V168c0-4.4-3.6-8-8-8h-56c-4.4 0-8 3.6-8 8v688c0 4.4 3.6 8 8 8h752c4.4 0 8-3.6 8-8v-56c0-4.4-3.6-8-8-8zM305.8 637.7c3.1 3.1 8.1 3.1 11.3 0l138.3-137.6L632.5 677c3.1 3.1 8.2 3.1 11.3 0l310.2-310.4c3.1-3.1 3.1-8.2 0-11.3l-39.6-39.6a8.03 8.03 0 00-11.3 0l-264.4 264.6-177-177a8.03 8.03 0 00-11.3 0L266.3 586.7a8.03 8.03 0 000 11.3l39.5 39.7z"/></svg>
<svg class="a" style="left:842px;top:370px;" width="16" height="16" viewBox="0 0 1024 1024" fill="#222"><path d="M360 184h-8c4.4 0 8-3.6 8-8v8h304v-8c0 4.4 3.6 8 8 8h-8v72h72v-80c0-35.3-28.7-64-64-64H352c-35.3 0-64 28.7-64 64v80h72v-72zm504 72H160c-17.7 0-32 14.3-32 32v32c0 4.4 3.6 8 8 8h60.4l24.7 523c1.6 34.1 29.8 61 63.9 61h454c34.2 0 62.3-26.8 63.9-61l24.7-523H888c4.4 0 8-3.6 8-8v-32c0-17.7-14.3-32-32-32zM731.3 840H292.7l-24.2-512h487l-24.2 512z"/></svg>
<div class="a" style="left:763px;top:423px;width:110px;height:1px;background:#f0f0f0"></div>
<svg class="a" style="left:782px;top:401px;" width="16" height="16" viewBox="0 0 1024 1024" fill="#222"><path d="M909.3 506.3L781.7 405.6a7.23 7.23 0 00-11.7 5.7V476H548V254h64.8c6 0 9.4-7 5.7-11.7L517.7 114.7a7.14 7.14 0 00-11.3 0L405.6 242.3a7.23 7.23 0 005.7 11.7H476v222H254v-64.8c0-6-7-9.4-11.7-5.7L114.7 506.3a7.14 7.14 0 000 11.3l127.5 100.8c4.7 3.7 11.7.4 11.7-5.7V548h222v222h-64.8c-6 0-9.4 7-5.7 11.7l100.8 127.5c2.9 3.7 8.5 3.7 11.3 0l100.8-127.5c3.7-4.7.4-11.7-5.7-11.7H548V548h222v64.8c0 6 7 9.4 11.7 5.7l127.5-100.8a7.3 7.3 0 00.1-11.4z"/></svg>
<svg class="a" style="left:812px;top:401px;" width="16" height="16" viewBox="0 0 1024 1024" fill="#c8c8c8"><path d="M888 792H200V168c0-4.4-3.6-8-8-8h-56c-4.4 0-8 3.6-8 8v688c0 4.4 3.6 8 8 8h752c4.4 0 8-3.6 8-8v-56c0-4.4-3.6-8-8-8zM305.8 637.7c3.1 3.1 8.1 3.1 11.3 0l138.3-137.6L632.5 677c3.1 3.1 8.2 3.1 11.3 0l310.2-310.4c3.1-3.1 3.1-8.2 0-11.3l-39.6-39.6a8.03 8.03 0 00-11.3 0l-264.4 264.6-177-177a8.03 8.03 0 00-11.3 0L266.3 586.7a8.03 8.03 0 000 11.3l39.5 39.7z"/></svg>
<svg class="a" style="left:842px;top:401px;" width="16" height="16" viewBox="0 0 1024 1024" fill="#222"><path d="M360 184h-8c4.4 0 8-3.6 8-8v8h304v-8c0 4.4 3.6 8 8 8h-8v72h72v-80c0-35.3-28.7-64-64-64H352c-35.3 0-64 28.7-64 64v80h72v-72zm504 72H160c-17.7 0-32 14.3-32 32v32c0 4.4 3.6 8 8 8h60.4l24.7 523c1.6 34.1 29.8 61 63.9 61h454c34.2 0 62.3-26.8 63.9-61l24.7-523H888c4.4 0 8-3.6 8-8v-32c0-17.7-14.3-32-32-32zM731.3 840H292.7l-24.2-512h487l-24.2 512z"/></svg>
<div class="a" style="left:763px;top:454px;width:110px;height:1px;background:#f0f0f0"></div>
<svg class="a" style="left:782px;top:432px;" width="16" height="16" viewBox="0 0 1024 1024" fill="#222"><path d="M909.3 506.3L781.7 405.6a7.23 7.23 0 00-11.7 5.7V476H548V254h64.8c6 0 9.4-7 5.7-11.7L517.7 114.7a7.14 7.14 0 00-11.3 0L405.6 242.3a7.23 7.23 0 005.7 11.7H476v222H254v-64.8c0-6-7-9.4-11.7-5.7L114.7 506.3a7.14 7.14 0 000 11.3l127.5 100.8c4.7 3.7 11.7.4 11.7-5.7V548h222v222h-64.8c-6 0-9.4 7-5.7 11.7l100.8 127.5c2.9 3.7 8.5 3.7 11.3 0l100.8-127.5c3.7-4.7.4-11.7-5.7-11.7H548V548h222v64.8c0 6 7 9.4 11.7 5.7l127.5-100.8a7.3 7.3 0 00.1-11.4z"/></svg>
<svg class="a" style="left:812px;top:432px;" width="16" height="16" viewBox="0 0 1024 1024" fill="#c8c8c8"><path d="M888 792H200V168c0-4.4-3.6-8-8-8h-56c-4.4 0-8 3.6-8 8v688c0 4.4 3.6 8 8 8h752c4.4 0 8-3.6 8-8v-56c0-4.4-3.6-8-8-8zM305.8 637.7c3.1 3.1 8.1 3.1 11.3 0l138.3-137.6L632.5 677c3.1 3.1 8.2 3.1 11.3 0l310.2-310.4c3.1-3.1 3.1-8.2 0-11.3l-39.6-39.6a8.03 8.03 0 00-11.3 0l-264.4 264.6-177-177a8.03 8.03 0 00-11.3 0L266.3 586.7a8.03 8.03 0 000 11.3l39.5 39.7z"/></svg>
<svg class="a" style="left:842px;top:432px;" width="16" height="16" viewBox="0 0 1024 1024" fill="#222"><path d="M360 184h-8c4.4 0 8-3.6 8-8v8h304v-8c0 4.4 3.6 8 8 8h-8v72h72v-80c0-35.3-28.7-64-64-64H352c-35.3 0-64 28.7-64 64v80h72v-72zm504 72H160c-17.7 0-32 14.3-32 32v32c0 4.4 3.6 8 8 8h60.4l24.7 523c1.6 34.1 29.8 61 63.9 61h454c34.2 0 62.3-26.8 63.9-61l24.7-523H888c4.4 0 8-3.6 8-8v-32c0-17.7-14.3-32-32-32zM731.3 840H292.7l-24.2-512h487l-24.2 512z"/></svg>
<div class="a" style="left:763px;top:485px;width:110px;height:1px;background:#f0f0f0"></div>
<svg class="a" style="left:782px;top:463px;" width="16" height="16" viewBox="0 0 1024 1024" fill="#222"><path d="M909.3 506.3L781.7 405.6a7.23 7.23 0 00-11.7 5.7V476H548V254h64.8c6 0 9.4-7 5.7-11.7L517.7 114.7a7.14 7.14 0 00-11.3 0L405.6 242.3a7.23 7.23 0 005.7 11.7H476v222H254v-64.8c0-6-7-9.4-11.7-5.7L114.7 506.3a7.14 7.14 0 000 11.3l127.5 100.8c4.7 3.7 11.7.4 11.7-5.7V548h222v222h-64.8c-6 0-9.4 7-5.7 11.7l100.8 127.5c2.9 3.7 8.5 3.7 11.3 0l100.8-127.5c3.7-4.7.4-11.7-5.7-11.7H548V548h222v64.8c0 6 7 9.4 11.7 5.7l127.5-100.8a7.3 7.3 0 00.1-11.4z"/></svg>
<svg class="a" style="left:812px;top:463px;" width="16" height="16" viewBox="0 0 1024 1024" fill="#c8c8c8"><path d="M888 792H200V168c0-4.4-3.6-8-8-8h-56c-4.4 0-8 3.6-8 8v688c0 4.4 3.6 8 8 8h752c4.4 0 8-3.6 8-8v-56c0-4.4-3.6-8-8-8zM305.8 637.7c3.1 3.1 8.1 3.1 11.3 0l138.3-137.6L632.5 677c3.1 3.1 8.2 3.1 11.3 0l310.2-310.4c3.1-3.1 3.1-8.2 0-11.3l-39.6-39.6a8.03 8.03 0 00-11.3 0l-264.4 264.6-177-177a8.03 8.03 0 00-11.3 0L266.3 586.7a8.03 8.03 0 000 11.3l39.5 39.7z"/></svg>
<svg class="a" style="left:842px;top:463px;" width="16" height="16" viewBox="0 0 1024 1024" fill="#222"><path d="M360 184h-8c4.4 0 8-3.6 8-8v8h304v-8c0 4.4 3.6 8 8 8h-8v72h72v-80c0-35.3-28.7-64-64-64H352c-35.3 0-64 28.7-64 64v80h72v-72zm504 72H160c-17.7 0-32 14.3-32 32v32c0 4.4 3.6 8 8 8h60.4l24.7 523c1.6 34.1 29.8 61 63.9 61h454c34.2 0 62.3-26.8 63.9-61l24.7-523H888c4.4 0 8-3.6 8-8v-32c0-17.7-14.3-32-32-32zM731.3 840H292.7l-24.2-512h487l-24.2 512z"/></svg>
<div class="a" style="left:763px;top:516px;width:110px;height:1px;background:#f0f0f0"></div>
<svg class="a" style="left:782px;top:494px;" width="16" height="16" viewBox="0 0 1024 1024" fill="#222"><path d="M909.3 506.3L781.7 405.6a7.23 7.23 0 00-11.7 5.7V476H548V254h64.8c6 0 9.4-7 5.7-11.7L517.7 114.7a7.14 7.14 0 00-11.3 0L405.6 242.3a7.23 7.23 0 005.7 11.7H476v222H254v-64.8c0-6-7-9.4-11.7-5.7L114.7 506.3a7.14 7.14 0 000 11.3l127.5 100.8c4.7 3.7 11.7.4 11.7-5.7V548h222v222h-64.8c-6 0-9.4 7-5.7 11.7l100.8 127.5c2.9 3.7 8.5 3.7 11.3 0l100.8-127.5c3.7-4.7.4-11.7-5.7-11.7H548V548h222v64.8c0 6 7 9.4 11.7 5.7l127.5-100.8a7.3 7.3 0 00.1-11.4z"/></svg>
<svg class="a" style="left:812px;top:494px;" width="16" height="16" viewBox="0 0 1024 1024" fill="#c8c8c8"><path d="M888 792H200V168c0-4.4-3.6-8-8-8h-56c-4.4 0-8 3.6-8 8v688c0 4.4 3.6 8 8 8h752c4.4 0 8-3.6 8-8v-56c0-4.4-3.6-8-8-8zM305.8 637.7c3.1 3.1 8.1 3.1 11.3 0l138.3-137.6L632.5 677c3.1 3.1 8.2 3.1 11.3 0l310.2-310.4c3.1-3.1 3.1-8.2 0-11.3l-39.6-39.6a8.03 8.03 0 00-11.3 0l-264.4 264.6-177-177a8.03 8.03 0 00-11.3 0L266.3 586.7a8.03 8.03 0 000 11.3l39.5 39.7z"/></svg>
<svg class="a" style="left:842px;top:494px;" width="16" height="16" viewBox="0 0 1024 1024" fill="#222"><path d="M360 184h-8c4.4 0 8-3.6 8-8v8h304v-8c0 4.4 3.6 8 8 8h-8v72h72v-80c0-35.3-28.7-64-64-64H352c-35.3 0-64 28.7-64 64v80h72v-72zm504 72H160c-17.7 0-32 14.3-32 32v32c0 4.4 3.6 8 8 8h60.4l24.7 523c1.6 34.1 29.8 61 63.9 61h454c34.2 0 62.3-26.8 63.9-61l24.7-523H888c4.4 0 8-3.6 8-8v-32c0-17.7-14.3-32-32-32zM731.3 840H292.7l-24.2-512h487l-24.2 512z"/></svg>
<div class="a" style="left:763px;top:547px;width:110px;height:1px;background:#f0f0f0"></div>
<svg class="a" style="left:782px;top:525px;" width="16" height="16" viewBox="0 0 1024 1024" fill="#222"><path d="M909.3 506.3L781.7 405.6a7.23 7.23 0 00-11.7 5.7V476H548V254h64.8c6 0 9.4-7 5.7-11.7L517.7 114.7a7.14 7.14 0 00-11.3 0L405.6 242.3a7.23 7.23 0 005.7 11.7H476v222H254v-64.8c0-6-7-9.4-11.7-5.7L114.7 506.3a7.14 7.14 0 000 11.3l127.5 100.8c4.7 3.7 11.7.4 11.7-5.7V548h222v222h-64.8c-6 0-9.4 7-5.7 11.7l100.8 127.5c2.9 3.7 8.5 3.7 11.3 0l100.8-127.5c3.7-4.7.4-11.7-5.7-11.7H548V548h222v64.8c0 6 7 9.4 11.7 5.7l127.5-100.8a7.3 7.3 0 00.1-11.4z"/></svg>
<svg class="a" style="left:812px;top:525px;" width="16" height="16" viewBox="0 0 1024 1024" fill="#c8c8c8"><path d="M888 792H200V168c0-4.4-3.6-8-8-8h-56c-4.4 0-8 3.6-8 8v688c0 4.4 3.6 8 8 8h752c4.4 0 8-3.6 8-8v-56c0-4.4-3.6-8-8-8zM305.8 637.7c3.1 3.1 8.1 3.1 11.3 0l138.3-137.6L632.5 677c3.1 3.1 8.2 3.1 11.3 0l310.2-310.4c3.1-3.1 3.1-8.2 0-11.3l-39.6-39.6a8.03 8.03 0 00-11.3 0l-264.4 264.6-177-177a8.03 8.03 0 00-11.3 0L266.3 586.7a8.03 8.03 0 000 11.3l39.5 39.7z"/></svg>
<svg class="a" style="left:842px;top:525px;" width="16" height="16" viewBox="0 0 1024 1024" fill="#222"><path d="M360 184h-8c4.4 0 8-3.6 8-8v8h304v-8c0 4.4 3.6 8 8 8h-8v72h72v-80c0-35.3-28.7-64-64-64H352c-35.3 0-64 28.7-64 64v80h72v-72zm504 72H160c-17.7 0-32 14.3-32 32v32c0 4.4 3.6 8 8 8h60.4l24.7 523c1.6 34.1 29.8 61 63.9 61h454c34.2 0 62.3-26.8 63.9-61l24.7-523H888c4.4 0 8-3.6 8-8v-32c0-17.7-14.3-32-32-32zM731.3 840H292.7l-24.2-512h487l-24.2 512z"/></svg>
<div class="a" style="left:873px;top:176px;width:5px;height:378px;background:#ececec;border-radius:3px"></div>
<div class="a" style="left:873px;top:176px;width:5px;height:85px;background:#c1c1c1;border-radius:3px"></div>
<div class="a" style="left:65px;top:554px;width:808px;height:5px;background:#ececec;border-radius:3px"></div>
<div class="a" style="left:65px;top:554px;width:505px;height:5px;background:#c1c1c1;border-radius:3px"></div>
<div class="a" style="left:65px;top:559px;width:813px;height:30px;background:#fafafa;border-bottom:1px solid #f0f0f0"></div>
<div class="a" style="left:74px;top:562px;width:30px;height:24px;border:1px solid #d9d9d9;border-radius:2px;background:#fff"></div>
<div class="a" style="left:84px;top:573px;width:1.5px;height:2px;background:#333"></div>
<div class="a" style="left:88px;top:573px;width:1.5px;height:2px;background:#333"></div>
<div class="a" style="left:92.5px;top:573px;width:1.5px;height:2px;background:#333"></div>
<div class="a" style="left:112px;top:562px;width:144px;height:24px;border:1px solid #d9d9d9;border-radius:2px;background:#fff"></div>
<div class="a" style="left:113px;top:563px;width:79px;height:22px;background:#fafafa;border-right:1px solid #d9d9d9;border-radius:1px 0 0 1px"></div>
<div class="t" style="left:123.5px;top:565px;">起始地址</div>
<div class="t" style="left:199px;top:566.5px;font-size:13.5px">407</div>
<div class="a" style="left:264px;top:562px;width:112px;height:24px;border:1px solid #d9d9d9;border-radius:2px;background:#fff"></div>
<div class="a" style="left:265px;top:563px;width:51px;height:22px;background:#fafafa;border-right:1px solid #d9d9d9;border-radius:1px 0 0 1px"></div>
<div class="t" style="left:275.5px;top:565px;">数量</div>
<div class="t" style="left:323px;top:566.5px;font-size:13.5px">1</div>
<div class="a" style="left:384px;top:562px;width:66px;height:24px;border:1px solid #d9d9d9;border-radius:2px;background:#fff"></div>
<svg class="a" style="left:390px;top:566px;" width="16" height="16" viewBox="0 0 1024 1024" fill="#222"><path d="M696 480H544V328c0-4.4-3.6-8-8-8h-48c-4.4 0-8 3.6-8 8v152H328c-4.4 0-8 3.6-8 8v48c0 4.4 3.6 8 8 8h152v152c0 4.4 3.6 8 8 8h48c4.4 0 8-3.6 8-8V544h152c4.4 0 8-3.6 8-8v-48c0-4.4-3.6-8-8-8zM512 64C264.6 64 64 264.6 64 512s200.6 448 448 448 448-200.6 448-448S759.4 64 512 64zm0 820c-205.4 0-372-166.6-372-372s166.6-372 372-372 372 166.6 372 372-166.6 372-372 372z"/></svg>
<div class="t" style="left:412.5px;top:565px;">添加</div>
<svg class="a" style="left:701px;top:568px;" width="12" height="12" viewBox="0 0 1024 1024" fill="#bfbfbf"><path d="M724 218.3V141c0-6.7-7.7-10.4-12.9-6.3L260.3 486.8a31.86 31.86 0 000 50.3l450.8 352.1c5.3 4.1 12.9.4 12.9-6.3v-77.3c0-4.9-2.3-9.6-6.1-12.6l-360-281 360-281.1c3.8-3 6.1-7.7 6.1-12.6z"/></svg>
<div class="a" style="left:719px;top:562px;width:24px;height:24px;border:1px solid #1677ff;border-radius:2px;background:#fff"></div>
<div class="t" style="left:726.5px;top:566.5px;color:#1677ff;font-size:13.7px">1</div>
<svg class="a" style="left:749px;top:568px;" width="12" height="12" viewBox="0 0 1024 1024" fill="#bfbfbf"><path d="M765.7 486.8L314.9 134.7A7.97 7.97 0 00302 141v77.3c0 4.9 2.3 9.6 6.1 12.6l360 281.1-360 281.1c-3.9 3-6.1 7.7-6.1 12.6V883c0 6.7 7.7 10.4 12.9 6.3l450.8-352.1a31.96 31.96 0 000-50.4z"/></svg>
<div class="a" style="left:769px;top:562px;width:104px;height:24px;border:1px solid #d9d9d9;border-radius:2px;background:#fff"></div>
<div class="t" style="left:777px;top:567px;font-size:13.7px">100 / page</div>
<svg class="a" style="left:849px;top:568px;" width="12" height="12" viewBox="0 0 1024 1024" fill="#bfbfbf"><path d="M884 256h-75c-5.1 0-9.9 2.5-12.9 6.6L512 654.2 227.9 262.6c-3-4.1-7.8-6.6-12.9-6.6h-75c-6.5 0-10.3 7.4-6.5 12.7l352.6 486.1c12.8 17.6 39 17.6 51.7 0l352.6-486.1c3.9-5.3.1-12.7-6.4-12.7z"/></svg>
<div class="a" style="left:65px;top:589px;width:813px;height:6px;background:#f8f8f8"></div>
<div class="a" style="left:456px;top:590px;width:30px;height:4px;border-top:1px solid #d9d9d9;border-bottom:1px solid #d9d9d9"></div>
<svg class="a" style="left:426px;top:620px" width="110" height="100" viewBox="0 0 110 100" >
<ellipse cx="45.5" cy="93" rx="44.5" ry="7.5" fill="#f5f5f7"/>
<path d="M9 67 L21 54 H71 L81 67 Z" fill="#aeb8c2"/>
<rect x="20.4" y="21.7" width="50" height="53" rx="2" fill="#f5f5f7"/>
<rect x="27.8" y="28" width="35.2" height="19" rx="1" fill="#dce0e6"/>
<rect x="27.8" y="55" width="35.2" height="2.4" rx="1.2" fill="#dce0e6"/>
<rect x="27.8" y="62.6" width="35.2" height="2.4" rx="1.2" fill="#dce0e6"/>
<path d="M9 68 Q9 67 10.5 67 H19.5 Q21 67 22 69 L24.5 72.5 Q26 74.6 28.5 74.6 H62 Q64.5 74.6 66 72.5 L68.5 69 Q69.5 67 71 67 H80 Q81.5 67 81.5 68 V91.5 Q81.5 94 79 94 H11.5 Q9 94 9 91.5 Z" fill="#dce0e6"/>
<ellipse cx="91.2" cy="12.9" rx="14.8" ry="12.1" fill="#dce0e6"/>
<path d="M80 18 L77.5 25 L86 22.5 Z" fill="#dce0e6"/>
<path d="M83.5 15 L85.3 11.6 L87.1 15 Z" fill="#fff"/><rect x="89" y="11.6" width="3.6" height="3.4" fill="#fff"/><rect x="95.4" y="11.6" width="3.6" height="3.4" fill="#fff"/>
</svg>
<div class="a" style="left:878px;top:108px;width:6px;height:648px;background:#fafafa"></div>
<div class="a" style="left:879px;top:432px;width:4px;height:30px;background:#e6e6e6"></div>
<div class="a" style="left:884px;top:109px;width:185px;height:647px;border:1px solid #e5e5e5;border-bottom:none;background:#fff"></div>
<div class="a" style="left:885px;top:109px;width:183px;height:28px;background:#fafafa;border-bottom:1px solid #e8e8e8"></div>
<svg class="a" style="left:901px;top:117.0px;" width="12" height="12" viewBox="0 0 1024 1024" fill="#333"><path d="M884 256h-75c-5.1 0-9.9 2.5-12.9 6.6L512 654.2 227.9 262.6c-3-4.1-7.8-6.6-12.9-6.6h-75c-6.5 0-10.3 7.4-6.5 12.7l352.6 486.1c12.8 17.6 39 17.6 51.7 0l352.6-486.1c3.9-5.3.1-12.7-6.4-12.7z"/></svg>
<div class="t" style="left:924.5px;top:114.5px;">连接设置</div>
<div class="a" style="left:892.5px;top:144px;width:41.5px;height:18px;overflow:hidden"><div class="t" style="left:0;top:0">连接类型</div></div>
<div class="a" style="left:934px;top:141px;width:126px;height:24px;border:1px solid #d9d9d9;border-radius:2px;background:#fff"></div>
<div class="t" style="left:943px;top:146px;font-size:13.7px">RTU</div>
<svg class="a" style="left:1037px;top:147px;" width="12" height="12" viewBox="0 0 1024 1024" fill="#bfbfbf"><path d="M884 256h-75c-5.1 0-9.9 2.5-12.9 6.6L512 654.2 227.9 262.6c-3-4.1-7.8-6.6-12.9-6.6h-75c-6.5 0-10.3 7.4-6.5 12.7l352.6 486.1c12.8 17.6 39 17.6 51.7 0l352.6-486.1c3.9-5.3.1-12.7-6.4-12.7z"/></svg>
<div class="a" style="left:892.5px;top:176px;width:41.5px;height:18px;overflow:hidden"><div class="t" style="left:0;top:0">路径:</div></div>
<div class="a" style="left:934px;top:173px;width:92px;height:24px;border:1px solid #d9d9d9;border-radius:2px;background:#fff"></div>
<div class="t" style="left:943px;top:178px;font-size:13.7px">COM9</div>
<div class="a" style="left:1030px;top:173px;width:30px;height:24px;border:1px solid #d9d9d9;border-radius:2px;background:#fff"></div>
<svg class="a" style="left:1038px;top:178.5px" width="14" height="16" viewBox="0 0 14 16" ><path d="M3.4 12.1 A5.9 5.9 0 1 1 10.6 12.3" stroke="#222" stroke-width="1.2" fill="none"/><path d="M8.7 14 L11.6 13.9 L11.3 10.9 Z" fill="#222"/></svg>
<div class="a" style="left:892.5px;top:208px;width:41.5px;height:18px;overflow:hidden"><div class="t" style="left:0;top:0">波特率</div></div>
<div class="a" style="left:934px;top:205px;width:126px;height:24px;border:1px solid #d9d9d9;border-radius:2px;background:#fff"></div>
<div class="t" style="left:943px;top:210px;font-size:13.7px">115200</div>
<div class="a" style="left:892.5px;top:240px;width:41.5px;height:18px;overflow:hidden"><div class="t" style="left:0;top:0">数据位</div></div>
<div class="a" style="left:934px;top:237px;width:126px;height:24px;border:1px solid #d9d9d9;border-radius:2px;background:#fff"></div>
<div class="t" style="left:943px;top:242px;font-size:13.7px">8</div>
<svg class="a" style="left:1037px;top:243px;" width="12" height="12" viewBox="0 0 1024 1024" fill="#bfbfbf"><path d="M884 256h-75c-5.1 0-9.9 2.5-12.9 6.6L512 654.2 227.9 262.6c-3-4.1-7.8-6.6-12.9-6.6h-75c-6.5 0-10.3 7.4-6.5 12.7l352.6 486.1c12.8 17.6 39 17.6 51.7 0l352.6-486.1c3.9-5.3.1-12.7-6.4-12.7z"/></svg>
<div class="a" style="left:892.5px;top:272px;width:41.5px;height:18px;overflow:hidden"><div class="t" style="left:0;top:0">校验位</div></div>
<div class="a" style="left:934px;top:269px;width:126px;height:24px;border:1px solid #d9d9d9;border-radius:2px;background:#fff"></div>
<div class="t" style="left:943px;top:274px;font-size:13.7px">None</div>
<svg class="a" style="left:1037px;top:275px;" width="12" height="12" viewBox="0 0 1024 1024" fill="#bfbfbf"><path d="M884 256h-75c-5.1 0-9.9 2.5-12.9 6.6L512 654.2 227.9 262.6c-3-4.1-7.8-6.6-12.9-6.6h-75c-6.5 0-10.3 7.4-6.5 12.7l352.6 486.1c12.8 17.6 39 17.6 51.7 0l352.6-486.1c3.9-5.3.1-12.7-6.4-12.7z"/></svg>
<div class="a" style="left:892.5px;top:304px;width:41.5px;height:18px;overflow:hidden"><div class="t" style="left:0;top:0">停止位</div></div>
<div class="a" style="left:934px;top:301px;width:126px;height:24px;border:1px solid #d9d9d9;border-radius:2px;background:#fff"></div>
<div class="t" style="left:943px;top:306px;font-size:13.7px">1</div>
<svg class="a" style="left:1037px;top:307px;" width="12" height="12" viewBox="0 0 1024 1024" fill="#bfbfbf"><path d="M884 256h-75c-5.1 0-9.9 2.5-12.9 6.6L512 654.2 227.9 262.6c-3-4.1-7.8-6.6-12.9-6.6h-75c-6.5 0-10.3 7.4-6.5 12.7l352.6 486.1c12.8 17.6 39 17.6 51.7 0l352.6-486.1c3.9-5.3.1-12.7-6.4-12.7z"/></svg>
<div class="a" style="left:892.5px;top:336px;width:41.5px;height:18px;overflow:hidden"><div class="t" style="left:0;top:0">设备 ID</div></div>
<div class="a" style="left:934px;top:333px;width:92px;height:24px;border:1px solid #d9d9d9;border-radius:2px;background:#fff"></div>
<div class="t" style="left:943px;top:338px;font-size:13.7px">1</div>
<div class="a" style="left:1030px;top:333px;width:30px;height:24px;border:1px solid #d9d9d9;border-radius:2px;background:#fff"></div>
<svg class="a" style="left:1037.5px;top:338.5px;" width="15" height="15" viewBox="0 0 1024 1024" fill="#222"><path d="M909.6 854.5L649.9 594.8C690.2 542.7 712 479 712 412c0-80.2-31.3-155.4-87.9-212.1-56.6-56.7-132-87.9-212.1-87.9s-155.5 31.3-212.1 87.9C143.2 256.5 112 331.8 112 412c0 80.1 31.3 155.5 87.9 212.1C256.5 680.8 331.8 712 412 712c67 0 130.6-21.8 182.7-62l259.7 259.6a8.2 8.2 0 0011.6 0l43.6-43.5a8.2 8.2 0 000-11.6zM570.4 570.4C528 612.7 471.8 636 412 636s-116-23.3-158.4-65.6C211.3 528 188 471.8 188 412s23.3-116.1 65.6-158.4C296 211.3 352.2 188 412 188s116.1 23.2 158.4 65.6S636 352.2 636 412s-23.3 116.1-65.6 158.4z"/></svg>
<div class="a" style="left:892.5px;top:368px;width:41.5px;height:18px;overflow:hidden"><div class="t" style="left:0;top:0">超时时间</div></div>
<div class="a" style="left:934px;top:365px;width:126px;height:24px;border:1px solid #d9d9d9;border-radius:2px;background:#fff"></div>
<div class="t" style="left:943px;top:370px;font-size:13.7px">30000</div>
<div class="a" style="left:1018px;top:366px;width:41px;height:22px;background:#fafafa;border-left:1px solid #d9d9d9;border-radius:0 1px 1px 0"></div>
<div class="t" style="left:1031px;top:370px;font-size:13.5px">ms</div>
<div class="a" style="left:892.5px;top:400px;width:41.5px;height:18px;overflow:hidden"><div class="t" style="left:0;top:0">自动刷新</div></div>
<div class="a" style="left:934px;top:403px;width:28px;height:16px;border-radius:8px;background:#1677ff"></div>
<div class="a" style="left:948px;top:405px;width:12px;height:12px;border-radius:6px;background:#fff"></div>
<div class="a" style="left:892.5px;top:432px;width:41.5px;height:18px;overflow:hidden"><div class="t" style="left:0;top:0">刷新间隔</div></div>
<div class="a" style="left:934px;top:429px;width:126px;height:24px;border:1px solid #d9d9d9;border-radius:2px;background:#fff"></div>
<div class="t" style="left:943px;top:434px;font-size:13.7px">500</div>
<div class="a" style="left:1018px;top:430px;width:41px;height:22px;background:#fafafa;border-left:1px solid #d9d9d9;border-radius:0 1px 1px 0"></div>
<div class="t" style="left:1031px;top:434px;font-size:13.5px">ms</div>
<div class="a" style="left:885px;top:457px;width:183px;height:1px;background:#e8e8e8"></div>
<div class="a" style="left:885px;top:458px;width:183px;height:27px;background:#fafafa;border-bottom:1px solid #e8e8e8"></div>
<svg class="a" style="left:901px;top:465.5px;" width="12" height="12" viewBox="0 0 1024 1024" fill="#333"><path d="M884 256h-75c-5.1 0-9.9 2.5-12.9 6.6L512 654.2 227.9 262.6c-3-4.1-7.8-6.6-12.9-6.6h-75c-6.5 0-10.3 7.4-6.5 12.7l352.6 486.1c12.8 17.6 39 17.6 51.7 0l352.6-486.1c3.9-5.3.1-12.7-6.4-12.7z"/></svg>
<div class="t" style="left:924.5px;top:463.0px;">图表</div>
<div class="t" style="left:892.5px;top:492px;">容量:</div>
<div class="a" style="left:934px;top:489px;width:126px;height:24px;border:1px solid #d9d9d9;border-radius:2px;background:#fff"></div>
<div class="t" style="left:943px;top:494px;font-size:13.7px">100</div>
<div class="a" style="left:885px;top:517px;width:183px;height:1px;background:#e8e8e8"></div>
<div class="a" style="left:885px;top:518px;width:183px;height:27px;background:#fafafa;border-bottom:1px solid #e8e8e8"></div>
<svg class="a" style="left:901px;top:525.5px;" width="12" height="12" viewBox="0 0 1024 1024" fill="#333"><path d="M884 256h-75c-5.1 0-9.9 2.5-12.9 6.6L512 654.2 227.9 262.6c-3-4.1-7.8-6.6-12.9-6.6h-75c-6.5 0-10.3 7.4-6.5 12.7l352.6 486.1c12.8 17.6 39 17.6 51.7 0l352.6-486.1c3.9-5.3.1-12.7-6.4-12.7z"/></svg>
<div class="t" style="left:924.5px;top:523.0px;">属性监视列表</div>
<div class="a" style="left:885px;top:545px;width:183px;height:31px;background:#fafafa;border-bottom:1px solid #f0f0f0"></div>
<div class="a" style="left:950px;top:549px;width:1px;height:22px;background:#f0f0f0"></div>
<div class="a" style="left:1017px;top:549px;width:1px;height:22px;background:#f0f0f0"></div>
<div class="t" style="left:892.5px;top:552px;">名称</div>
<div class="t" style="left:958.5px;top:552px;">内容</div>
<svg class="a" style="left:1036.5px;top:552.5px;" width="17" height="17" viewBox="0 0 1024 1024" fill="#222"><path d="M696 480H544V328c0-4.4-3.6-8-8-8h-48c-4.4 0-8 3.6-8 8v152H328c-4.4 0-8 3.6-8 8v48c0 4.4 3.6 8 8 8h152v152c0 4.4 3.6 8 8 8h48c4.4 0 8-3.6 8-8V544h152c4.4 0 8-3.6 8-8v-48c0-4.4-3.6-8-8-8zM512 64C264.6 64 64 264.6 64 512s200.6 448 448 448 448-200.6 448-448S759.4 64 512 64zm0 820c-205.4 0-372-166.6-372-372s166.6-372 372-372 372 166.6 372 372-166.6 372-372 372z"/></svg>
<svg class="a" style="left:940px;top:605px" width="70" height="50" viewBox="0 0 70 50" ><ellipse cx="35.8" cy="39.9" rx="31.2" ry="5.8" fill="#f5f5f5"/>
<path d="M13.3 18.8 L23.9 6.7 H47.2 L58.4 18.8 V38.7 Q58.4 41.7 55.4 41.7 H16.3 Q13.3 41.7 13.3 38.7 Z" fill="#fafafa" stroke="#e3e3e3" stroke-width="1"/>
<path d="M13.8 6.7 H58 V18.8 H13.8Z" fill="none"/>
<path d="M13.3 18.8 H22.5 Q25.4 18.8 25.4 21.5 V22.4 Q25.4 25.4 28.4 25.4 H42.7 Q45.7 25.4 45.7 22.4 V21.5 Q45.7 18.8 48.6 18.8 H58.4" fill="none" stroke="#e3e3e3" stroke-width="1"/></svg>
<div class="t" style="left:951px;top:662px;color:rgba(0,0,0,.25);font-size:13.5px">No Data</div>
<div class="a" style="left:885px;top:716px;width:183px;height:1px;background:#e5e5e5"></div>
<div class="a" style="left:64px;top:755px;width:1006px;height:1px;background:#e5e5e5"></div>
<div class="a" style="left:0px;top:764px;width:1078px;height:1px;background:#e5e5e5"></div>
<svg class="a" style="left:1px;top:772px" width="11" height="12" viewBox="0 0 11 12" ><rect x="1" y="1" width="9.5" height="9.5" stroke="#555" stroke-width="1.1" fill="none"/><path d="M3 3.5 L4.8 5.5 L3 7.5 M5.8 8 H8.2" stroke="#555" stroke-width="1" fill="none"/></svg>
<div class="t" style="left:15.5px;top:770px;font-size:12px">Console</div>
<svg class="a" style="left:66px;top:772px" width="12" height="12" viewBox="0 0 12 12" ><path d="M1.5 10 V6.5 A4.5 4.5 0 0 1 10.5 6.5 V10" stroke="#222" stroke-width="1.1" fill="none"/><rect x="1.5" y="7.5" width="2" height="3" stroke="#222" stroke-width="1" fill="none"/><rect x="8.5" y="7.5" width="2" height="3" stroke="#222" stroke-width="1" fill="none"/></svg>
<svg class="a" style="left:86px;top:772px" width="12" height="12" viewBox="0 0 12 12" ><circle cx="7" cy="6" r="2.4" stroke="#222" stroke-width="1.1" fill="none"/><path d="M3.3 11.5 Q4.5 8.8 7 8.8 Q9.5 8.8 10.7 11.5" stroke="#222" stroke-width="1.1" fill="none"/><path d="M6.6 2.4 Q5.8 .8 4.2 1.2 Q2.6 1.8 3.2 4 L3.8 5.2 M0.8 8.2 L2.6 6.4" stroke="#222" stroke-width="1" fill="none"/></svg>
<div class="t" style="left:98px;top:770px;font-size:12px">(0)</div>
</div><div id="frame"></div></body></html>
